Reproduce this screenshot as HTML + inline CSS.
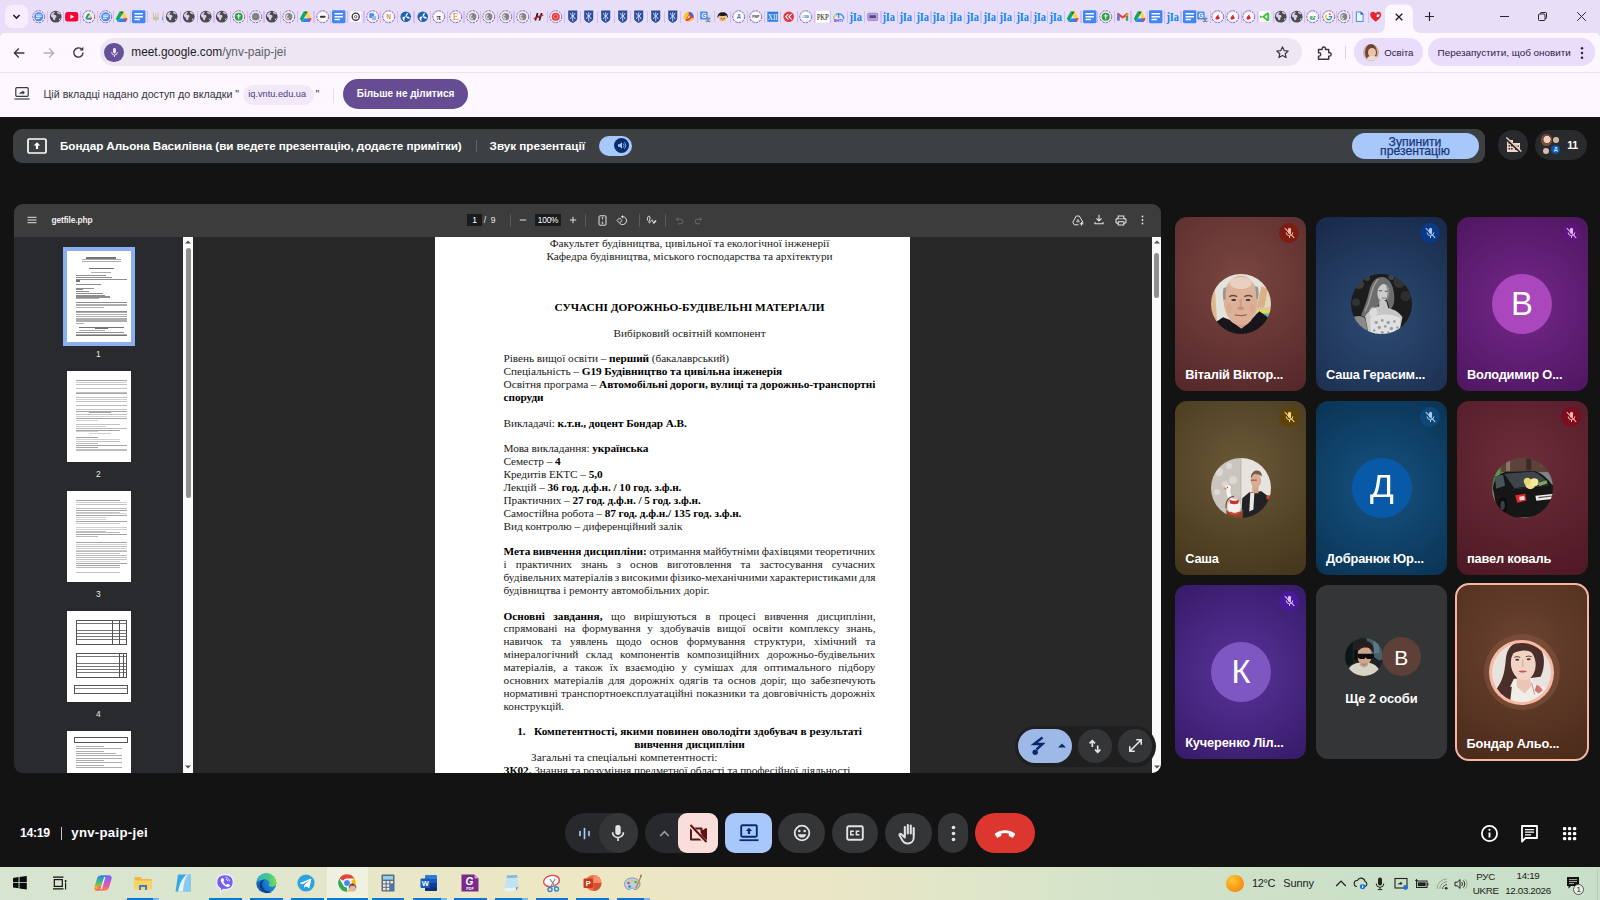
<!DOCTYPE html>
<html lang="uk"><head><meta charset="utf-8"><title>Meet – ynv-paip-jei</title>
<style>
*{box-sizing:border-box;margin:0;padding:0}
html,body{width:1600px;height:900px;overflow:hidden;background:#131314;font-family:"Liberation Sans",sans-serif}
.abs{position:absolute}
#root{position:relative;width:1600px;height:900px;overflow:hidden;background:#131314}
.t{position:absolute;white-space:nowrap;line-height:1}
svg{position:absolute;overflow:visible}
/* chrome */
#tabstrip{position:absolute;left:0;top:0;width:1600px;height:42px;background:#e9def7}
#toolbar{position:absolute;left:0;top:33px;width:1600px;height:39px;background:#fdf7ff;border-top-left-radius:5px;border-top-right-radius:5px}
#infobar{position:absolute;left:0;top:72px;width:1600px;height:44.5px;background:#fdf7ff;border-top:1px solid #ece4f2}
.tsep{position:absolute;top:10.5px;width:1.2px;height:12.5px;background:#d4bdfa}
/* doc */
#doc{position:absolute;left:503.5px;top:236.7px;width:372px;font-family:"Liberation Serif",serif;font-size:11.28px;line-height:12.87px;color:#1a1a1a}
#doc div{height:12.87px;white-space:nowrap}
#doc .c{text-align:center}
#doc .l{letter-spacing:-.055px}
#doc .j{white-space:normal;text-align:justify;text-align-last:justify}
#doc b{font-weight:700;color:#000}
.tile{position:absolute;border-radius:12px;overflow:hidden}
.tname{position:absolute;left:10px;bottom:8.5px;color:#fff;font-weight:700;font-size:12.8px;line-height:15px;white-space:nowrap;letter-spacing:-0.17px}
.av{position:absolute;border-radius:50%;overflow:hidden}
.avl{position:absolute;border-radius:50%;color:#fff;text-align:center}
.badge{position:absolute;width:20px;height:20px;border-radius:50%}
.cbtn{position:absolute;top:813.2px;height:39.8px;background:#333537;border-radius:20px}
</style></head>
<body><div id="root">
<div id="tabstrip">
<div class="abs" style="left:5px;top:5px;width:22.5px;height:23px;border-radius:7px;background:#f7edfd"></div>
<svg style="left:11px;top:11px" width="11" height="11" viewBox="0 0 11 11"><path d="M2.400 4l3.100 3.100L8.600 4" fill="none" stroke="#1f1a26" stroke-width="1.500"/></svg>
<svg style="left:32.03px;top:9.88px" width="13.44" height="13.44" viewBox="0 0 16 16"><circle cx="8" cy="8" r="7.1" fill="#f3ecfb" stroke="#7a68a2" stroke-width="1.15" stroke-dasharray="2.9 1.15"/><circle cx="8" cy="8" r="5.400" fill="#4a8cf5"/><path d="M4.800 6h6.400M4.800 8h6.400M4.800 10h4.200" stroke="#fff" stroke-width="1.150"/></svg>
<div class="tsep" style="left:46.59px"></div>
<svg style="left:48.70px;top:9.88px" width="13.44" height="13.44" viewBox="0 0 16 16"><circle cx="8" cy="8" r="7" fill="#4a4b4e"/><path d="M3 4.600C3.800 3.400 5 2.500 6.400 2c.5.800.2 1.600-.5 2.100-.8.600-.6 1.300.2 1.700.9.400 1.700.1 2.400.6.800.6.400 1.600-.3 2.200-.8.600-.5 1.500-.8 2.400-.2.700-.7 1.200-1.300 1.400-1.200-.8-1.100-2-1.600-3-.6-1-1.900-1.200-2.300-2.300 0-.9.300-1.800.8-2.500zM9.800 1.800c1.800.5 3.200 1.700 3.900 3.400-.6.300-1.300.1-1.700-.4-.5-.5-1.200-.3-1.700-.7-.6-.5-.8-1.500-.5-2.300zM14 9.500c-.3 1.200-.9 2.200-1.800 3-.5-.5-.6-1.200-.2-1.800.5-.6 1.200-1 2-1.200z" fill="#d9cfe8"/></svg>
<div class="tsep" style="left:63.26px"></div>
<svg style="left:65.38px;top:9.88px" width="13.44" height="13.44" viewBox="0 0 16 16"><rect x=".2" y="2.400" width="15.600" height="11.200" rx="3" fill="#ff0033"/><path d="M6.300 5.300v5.400l4.700-2.700z" fill="#fff"/></svg>
<div class="tsep" style="left:79.94px"></div>
<svg style="left:82.06px;top:9.88px" width="13.44" height="13.44" viewBox="0 0 16 16"><circle cx="8" cy="8" r="7.1" fill="#f3ecfb" stroke="#7a68a2" stroke-width="1.15" stroke-dasharray="2.9 1.15"/><g transform="translate(8 8) scale(0.58) translate(-8 -8)"><path d="M5.600 1.800h4.800L15 10h-4.800z" fill="#ffcf48"/><path d="M5.600 1.800L1 10l2.400 4.200L8 6z" fill="#0da960"/><path d="M5.800 10H15l-2.400 4.200H3.400z" fill="#2684fc"/><path d="M10.200 10H15l-2.400 4.200z" fill="#ea4335"/><path d="M5.600 1.800h4.800L8 6z" fill="#00832d"/></g></svg>
<div class="tsep" style="left:96.61px"></div>
<svg style="left:98.73px;top:9.88px" width="13.44" height="13.44" viewBox="0 0 16 16"><circle cx="8" cy="8" r="7.1" fill="#f3ecfb" stroke="#7a68a2" stroke-width="1.15" stroke-dasharray="2.9 1.15"/><circle cx="8" cy="8" r="5.400" fill="#4a8cf5"/><path d="M4.800 6h6.400M4.800 8h6.400M4.800 10h4.200" stroke="#fff" stroke-width="1.150"/></svg>
<div class="tsep" style="left:113.29px"></div>
<svg style="left:115.41px;top:9.88px" width="13.44" height="13.44" viewBox="0 0 16 16"><path d="M5.600 1.800h4.800L15 10h-4.800z" fill="#ffcf48"/><path d="M5.600 1.800L1 10l2.400 4.200L8 6z" fill="#0da960"/><path d="M5.800 10H15l-2.400 4.200H3.400z" fill="#2684fc"/><path d="M10.200 10H15l-2.400 4.200z" fill="#ea4335"/><path d="M5.600 1.800h4.800L8 6z" fill="#00832d"/></svg>
<div class="tsep" style="left:129.96px"></div>
<svg style="left:132.08px;top:9.88px" width="13.44" height="13.44" viewBox="0 0 16 16"><rect x="0" y=".3" width="16" height="15.400" rx="1.600" fill="#4285f4"/><path d="M3 4.600h10M3 8h10M3 11.400h6.400" stroke="#fff" stroke-width="1.800"/></svg>
<div class="tsep" style="left:146.64px"></div>
<svg style="left:148.76px;top:9.88px" width="13.44" height="13.44" viewBox="0 0 16 16"><path d="M4.600 2.200v9.600h2.200L8 14.800l1.200-3h2.200V2.200c-1.200 1-1.700 3-1.500 6H8.800L8 1.400l-.8 6.800H6.100C6.300 5.200 5.800 3.200 4.600 2.200z" fill="#cfc3a6"/><rect x="15.800" y="4" width="1.300" height="4" fill="#f2d34a"/><rect x="15.800" y="8" width="1.300" height="4" fill="#5a8ee0"/></svg>
<div class="tsep" style="left:163.31px"></div>
<svg style="left:165.43px;top:9.88px" width="13.44" height="13.44" viewBox="0 0 16 16"><circle cx="8" cy="8" r="7" fill="#4a4b4e"/><path d="M3 4.600C3.800 3.400 5 2.500 6.400 2c.5.800.2 1.600-.5 2.100-.8.600-.6 1.300.2 1.700.9.400 1.700.1 2.400.6.800.6.400 1.600-.3 2.200-.8.600-.5 1.500-.8 2.400-.2.700-.7 1.200-1.300 1.400-1.200-.8-1.100-2-1.600-3-.6-1-1.900-1.200-2.300-2.300 0-.9.300-1.800.8-2.500zM9.800 1.800c1.800.5 3.200 1.700 3.900 3.400-.6.300-1.300.1-1.700-.4-.5-.5-1.200-.3-1.700-.7-.6-.5-.8-1.500-.5-2.300zM14 9.500c-.3 1.200-.9 2.200-1.800 3-.5-.5-.6-1.200-.2-1.800.5-.6 1.200-1 2-1.200z" fill="#d9cfe8"/></svg>
<div class="tsep" style="left:179.99px"></div>
<svg style="left:182.11px;top:9.88px" width="13.44" height="13.44" viewBox="0 0 16 16"><circle cx="8" cy="8" r="7" fill="#4a4b4e"/><path d="M3 4.600C3.800 3.400 5 2.500 6.400 2c.5.800.2 1.600-.5 2.100-.8.600-.6 1.300.2 1.700.9.400 1.700.1 2.400.6.800.6.400 1.600-.3 2.200-.8.600-.5 1.500-.8 2.400-.2.700-.7 1.200-1.300 1.400-1.200-.8-1.100-2-1.600-3-.6-1-1.900-1.200-2.300-2.300 0-.9.300-1.800.8-2.500zM9.800 1.800c1.800.5 3.200 1.700 3.900 3.400-.6.300-1.300.1-1.700-.4-.5-.5-1.200-.3-1.700-.7-.6-.5-.8-1.500-.5-2.300zM14 9.500c-.3 1.200-.9 2.200-1.800 3-.5-.5-.6-1.200-.2-1.800.5-.6 1.200-1 2-1.200z" fill="#d9cfe8"/></svg>
<div class="tsep" style="left:196.66px"></div>
<svg style="left:198.78px;top:9.88px" width="13.44" height="13.44" viewBox="0 0 16 16"><circle cx="8" cy="8" r="7" fill="#4a4b4e"/><path d="M3 4.600C3.800 3.400 5 2.500 6.400 2c.5.800.2 1.600-.5 2.100-.8.600-.6 1.300.2 1.700.9.400 1.700.1 2.400.6.800.6.400 1.600-.3 2.200-.8.600-.5 1.500-.8 2.400-.2.700-.7 1.200-1.300 1.400-1.200-.8-1.100-2-1.600-3-.6-1-1.900-1.200-2.300-2.300 0-.9.300-1.800.8-2.500zM9.800 1.800c1.800.5 3.200 1.700 3.900 3.400-.6.300-1.300.1-1.700-.4-.5-.5-1.200-.3-1.700-.7-.6-.5-.8-1.500-.5-2.300zM14 9.500c-.3 1.200-.9 2.200-1.800 3-.5-.5-.6-1.200-.2-1.800.5-.6 1.200-1 2-1.200z" fill="#d9cfe8"/></svg>
<div class="tsep" style="left:213.34px"></div>
<svg style="left:215.46px;top:9.88px" width="13.44" height="13.44" viewBox="0 0 16 16"><circle cx="8" cy="8" r="7" fill="#4a4b4e"/><path d="M3 4.600C3.800 3.400 5 2.500 6.400 2c.5.800.2 1.600-.5 2.100-.8.600-.6 1.300.2 1.700.9.400 1.700.1 2.400.6.800.6.400 1.600-.3 2.200-.8.600-.5 1.500-.8 2.400-.2.700-.7 1.200-1.300 1.400-1.200-.8-1.100-2-1.600-3-.6-1-1.900-1.200-2.300-2.300 0-.9.300-1.800.8-2.500zM9.800 1.800c1.800.5 3.200 1.700 3.900 3.400-.6.300-1.300.1-1.700-.4-.5-.5-1.200-.3-1.700-.7-.6-.5-.8-1.500-.5-2.300zM14 9.500c-.3 1.200-.9 2.200-1.800 3-.5-.5-.6-1.200-.2-1.800.5-.6 1.200-1 2-1.200z" fill="#d9cfe8"/></svg>
<div class="tsep" style="left:230.01px"></div>
<svg style="left:232.13px;top:9.88px" width="13.44" height="13.44" viewBox="0 0 16 16"><circle cx="8" cy="8" r="7.1" fill="#f3ecfb" stroke="#7a68a2" stroke-width="1.15" stroke-dasharray="2.9 1.15"/><circle cx="8" cy="8" r="4.800" fill="#2f9e44"/><path d="M8 4.800v6.400M5.600 7h4.800" stroke="#fff" stroke-width="1.100"/></svg>
<div class="tsep" style="left:246.69px"></div>
<svg style="left:248.81px;top:9.88px" width="13.44" height="13.44" viewBox="0 0 16 16"><circle cx="8" cy="8" r="7.1" fill="#f3ecfb" stroke="#7a68a2" stroke-width="1.15" stroke-dasharray="2.9 1.15"/><circle cx="8" cy="8" r="4.600" fill="#8d8d8d"/><circle cx="8" cy="8" r="2.600" fill="none" stroke="#6a6a6a" stroke-width="1"/></svg>
<div class="tsep" style="left:263.36px"></div>
<svg style="left:265.48px;top:9.88px" width="13.44" height="13.44" viewBox="0 0 16 16"><circle cx="8" cy="8" r="7" fill="#4a4b4e"/><path d="M3 4.600C3.800 3.400 5 2.500 6.400 2c.5.800.2 1.600-.5 2.100-.8.600-.6 1.300.2 1.700.9.400 1.700.1 2.400.6.800.6.400 1.600-.3 2.200-.8.600-.5 1.500-.8 2.400-.2.700-.7 1.200-1.300 1.400-1.200-.8-1.100-2-1.600-3-.6-1-1.900-1.200-2.300-2.300 0-.9.300-1.800.8-2.500zM9.800 1.800c1.800.5 3.200 1.700 3.900 3.400-.6.300-1.300.1-1.700-.4-.5-.5-1.200-.3-1.700-.7-.6-.5-.8-1.500-.5-2.300zM14 9.500c-.3 1.200-.9 2.200-1.800 3-.5-.5-.6-1.200-.2-1.800.5-.6 1.200-1 2-1.200z" fill="#d9cfe8"/></svg>
<div class="tsep" style="left:280.04px"></div>
<svg style="left:282.15px;top:9.88px" width="13.44" height="13.44" viewBox="0 0 16 16"><circle cx="8" cy="8" r="7.1" fill="#f3ecfb" stroke="#7a68a2" stroke-width="1.15" stroke-dasharray="2.9 1.15"/><circle cx="8" cy="8" r="4.300" fill="#858585"/><path d="M6.200 5c1 .2 1.700.8 1.400 1.600-.3.700-1.300.6-1.400 1.400-.1.700.6 1 1.400 1.200.8.100 1 .8.600 1.600l-.5.900c-1.900-.100-3.400-1.600-3.400-3.500 0-1.400.8-2.600 1.900-3.200z" fill="#cfcfcf"/></svg>
<div class="tsep" style="left:296.71px"></div>
<svg style="left:298.83px;top:9.88px" width="13.44" height="13.44" viewBox="0 0 16 16"><path d="M5.600 1.800h4.800L15 10h-4.800z" fill="#ffcf48"/><path d="M5.600 1.800L1 10l2.400 4.200L8 6z" fill="#0da960"/><path d="M5.800 10H15l-2.400 4.200H3.400z" fill="#2684fc"/><path d="M10.200 10H15l-2.400 4.200z" fill="#ea4335"/><path d="M5.600 1.800h4.800L8 6z" fill="#00832d"/></svg>
<div class="tsep" style="left:313.39px"></div>
<svg style="left:315.50px;top:9.88px" width="13.44" height="13.44" viewBox="0 0 16 16"><circle cx="8" cy="8" r="7.1" fill="#f3ecfb" stroke="#7a68a2" stroke-width="1.15" stroke-dasharray="2.9 1.15"/><circle cx="8" cy="8" r="5" fill="#fff"/><rect x="4.600" y="6.700" width="6.800" height="2.600" rx="1.300" fill="#333"/></svg>
<div class="tsep" style="left:330.06px"></div>
<svg style="left:332.18px;top:9.88px" width="13.44" height="13.44" viewBox="0 0 16 16"><rect x="0" y=".3" width="16" height="15.400" rx="1.600" fill="#4285f4"/><path d="M3 4.600h10M3 8h10M3 11.400h6.400" stroke="#fff" stroke-width="1.800"/></svg>
<div class="tsep" style="left:346.74px"></div>
<svg style="left:348.85px;top:9.88px" width="13.44" height="13.44" viewBox="0 0 16 16"><rect x="1.600" y="1.600" width="12.800" height="12.800" rx="1.500" fill="#fff"/><circle cx="8" cy="8" r="4.200" fill="none" stroke="#3a3a3a" stroke-width="1.600"/><circle cx="8" cy="8" r="1.500" fill="none" stroke="#3a3a3a" stroke-width=".9"/></svg>
<div class="tsep" style="left:363.41px"></div>
<svg style="left:365.53px;top:9.88px" width="13.44" height="13.44" viewBox="0 0 16 16"><circle cx="8" cy="8" r="7.1" fill="#f3ecfb" stroke="#7a68a2" stroke-width="1.15" stroke-dasharray="2.9 1.15"/><rect x="4" y="4" width="5.600" height="5.600" rx="1" fill="#4a8cf5"/><rect x="7" y="7" width="5" height="5" rx="1" fill="#9db8e8"/></svg>
<div class="tsep" style="left:380.09px"></div>
<svg style="left:382.20px;top:9.88px" width="13.44" height="13.44" viewBox="0 0 16 16"><circle cx="8" cy="8" r="7.1" fill="#f3ecfb" stroke="#7a68a2" stroke-width="1.15" stroke-dasharray="2.9 1.15"/><circle cx="8" cy="8" r="5.200" fill="#fff"/><text x="8" y="10.625" text-anchor="middle" font-family="Liberation Sans, sans-serif" font-size="7.5" font-weight="700" fill="#e8833a">N</text></svg>
<div class="tsep" style="left:396.76px"></div>
<svg style="left:398.88px;top:9.88px" width="13.44" height="13.44" viewBox="0 0 16 16"><circle cx="8" cy="8" r="6.300" fill="#1e62b8"/><path d="M8 8c-.4-2.200.6-4.200 2.600-4.800C10.400 5.400 9.600 7 8 8zM8 8c2.100-.8 4.300 0 5.200 1.900-2.100.7-3.900.1-5.200-1.900zM8 8c-1.700 1.500-2.200 3.700-1 5.500C5 12.800 3.800 10.600 4.200 8.600 5.600 7.600 6.800 7.400 8 8z" fill="#fff"/><path d="M8 8c-1.600-1-3.500-.9-4.700.3.300-2 1.600-3.500 3.300-4.100C7.700 5.400 8.200 6.700 8 8z" fill="#fff" opacity=".0"/></svg>
<div class="tsep" style="left:413.44px"></div>
<svg style="left:415.56px;top:9.88px" width="13.44" height="13.44" viewBox="0 0 16 16"><circle cx="8" cy="8" r="6.300" fill="#1e62b8"/><path d="M8 8c-.4-2.200.6-4.200 2.600-4.800C10.400 5.400 9.600 7 8 8zM8 8c2.100-.8 4.300 0 5.200 1.900-2.100.7-3.900.1-5.200-1.900zM8 8c-1.700 1.500-2.200 3.700-1 5.500C5 12.800 3.800 10.600 4.200 8.600 5.600 7.600 6.800 7.400 8 8z" fill="#fff"/><path d="M8 8c-1.600-1-3.500-.9-4.700.3.300-2 1.600-3.500 3.300-4.100C7.700 5.400 8.200 6.700 8 8z" fill="#fff" opacity=".0"/></svg>
<div class="tsep" style="left:430.11px"></div>
<svg style="left:432.23px;top:9.88px" width="13.44" height="13.44" viewBox="0 0 16 16"><circle cx="8" cy="8" r="7.1" fill="#f3ecfb" stroke="#7a68a2" stroke-width="1.15" stroke-dasharray="2.9 1.15"/><circle cx="8" cy="8" r="5.200" fill="#fff"/><text x="8" y="11.325" text-anchor="middle" font-family="Liberation Serif, serif" font-size="9.5" font-weight="700" fill="#444">π</text></svg>
<div class="tsep" style="left:446.79px"></div>
<svg style="left:448.90px;top:9.88px" width="13.44" height="13.44" viewBox="0 0 16 16"><circle cx="8" cy="8" r="7.1" fill="#f3ecfb" stroke="#7a68a2" stroke-width="1.15" stroke-dasharray="2.9 1.15"/><circle cx="8" cy="8" r="5.200" fill="#fff"/><text x="8" y="12.375" text-anchor="middle" font-family="Liberation Serif, serif" font-size="12.5" font-weight="400" fill="#f08030">E</text></svg>
<div class="tsep" style="left:463.46px"></div>
<svg style="left:465.58px;top:9.88px" width="13.44" height="13.44" viewBox="0 0 16 16"><circle cx="8" cy="8" r="7.1" fill="#f3ecfb" stroke="#7a68a2" stroke-width="1.15" stroke-dasharray="2.9 1.15"/><circle cx="8" cy="8" r="4.300" fill="#858585"/><path d="M6.200 5c1 .2 1.700.8 1.400 1.600-.3.700-1.300.6-1.400 1.400-.1.700.6 1 1.400 1.200.8.100 1 .8.600 1.600l-.5.900c-1.900-.100-3.400-1.600-3.400-3.500 0-1.400.8-2.600 1.900-3.200z" fill="#cfcfcf"/></svg>
<div class="tsep" style="left:480.14px"></div>
<svg style="left:482.25px;top:9.88px" width="13.44" height="13.44" viewBox="0 0 16 16"><circle cx="8" cy="8" r="7.1" fill="#f3ecfb" stroke="#7a68a2" stroke-width="1.15" stroke-dasharray="2.9 1.15"/><circle cx="8" cy="8" r="4.300" fill="#858585"/><path d="M6.200 5c1 .2 1.700.8 1.400 1.600-.3.700-1.300.6-1.400 1.400-.1.700.6 1 1.400 1.200.8.100 1 .8.600 1.600l-.5.900c-1.900-.100-3.400-1.600-3.400-3.500 0-1.400.8-2.600 1.900-3.200z" fill="#cfcfcf"/></svg>
<div class="tsep" style="left:496.81px"></div>
<svg style="left:498.93px;top:9.88px" width="13.44" height="13.44" viewBox="0 0 16 16"><circle cx="8" cy="8" r="7.1" fill="#f3ecfb" stroke="#7a68a2" stroke-width="1.15" stroke-dasharray="2.9 1.15"/><circle cx="8" cy="8" r="4.300" fill="#858585"/><path d="M6.200 5c1 .2 1.700.8 1.400 1.600-.3.700-1.300.6-1.400 1.400-.1.700.6 1 1.400 1.200.8.100 1 .8.600 1.600l-.5.900c-1.900-.100-3.400-1.600-3.400-3.500 0-1.400.8-2.600 1.900-3.200z" fill="#cfcfcf"/></svg>
<div class="tsep" style="left:513.49px"></div>
<svg style="left:515.61px;top:9.88px" width="13.44" height="13.44" viewBox="0 0 16 16"><circle cx="8" cy="8" r="7.1" fill="#f3ecfb" stroke="#7a68a2" stroke-width="1.15" stroke-dasharray="2.9 1.15"/><circle cx="8" cy="8" r="4.300" fill="#858585"/><path d="M6.200 5c1 .2 1.700.8 1.400 1.600-.3.700-1.300.6-1.400 1.400-.1.700.6 1 1.400 1.200.8.100 1 .8.600 1.600l-.5.900c-1.900-.100-3.400-1.600-3.400-3.500 0-1.400.8-2.600 1.900-3.200z" fill="#cfcfcf"/></svg>
<div class="tsep" style="left:530.16px"></div>
<svg style="left:532.28px;top:9.88px" width="13.44" height="13.44" viewBox="0 0 16 16"><path d="M3 12.500l2.600-9h2l-.9 3.200h2.800l.9-3.200h2l-2.600 9h-2l1-3.600H6l-1 3.600z" fill="#1f1f1f"/><path d="M1.800 9.600l11.400-4.400.6 1.300L2.400 10.900z" fill="#e01b24"/></svg>
<div class="tsep" style="left:546.84px"></div>
<svg style="left:548.96px;top:9.88px" width="13.44" height="13.44" viewBox="0 0 16 16"><circle cx="8" cy="8" r="7.1" fill="#f3ecfb" stroke="#7a68a2" stroke-width="1.15" stroke-dasharray="2.9 1.15"/><circle cx="8" cy="8" r="4.800" fill="#e5383b"/><circle cx="8" cy="8" r="2.600" fill="none" stroke="#f8b4b4" stroke-width=".8"/></svg>
<div class="tsep" style="left:563.51px"></div>
<svg style="left:565.63px;top:9.88px" width="13.44" height="13.44" viewBox="0 0 16 16"><path d="M2.600 .6h10.800v9c0 3-2.300 4.800-5.400 5.800-3.100-1-5.400-2.800-5.400-5.800z" fill="#2b4da0"/><path d="M8 2.600v11M5.200 3.600c0 3.600 5.600 3.600 5.600 7.200M10.800 3.600c0 3.600-5.600 3.600-5.600 7.200" stroke="#e4eaf7" stroke-width="1" fill="none"/></svg>
<div class="tsep" style="left:580.19px"></div>
<svg style="left:582.30px;top:9.88px" width="13.44" height="13.44" viewBox="0 0 16 16"><path d="M2.600 .6h10.800v9c0 3-2.300 4.800-5.400 5.800-3.100-1-5.400-2.800-5.400-5.800z" fill="#2b4da0"/><path d="M8 2.600v11M5.200 3.600c0 3.600 5.600 3.600 5.600 7.200M10.800 3.600c0 3.600-5.600 3.600-5.600 7.200" stroke="#e4eaf7" stroke-width="1" fill="none"/></svg>
<div class="tsep" style="left:596.86px"></div>
<svg style="left:598.98px;top:9.88px" width="13.44" height="13.44" viewBox="0 0 16 16"><path d="M2.600 .6h10.800v9c0 3-2.300 4.800-5.400 5.800-3.100-1-5.400-2.800-5.400-5.800z" fill="#2b4da0"/><path d="M8 2.600v11M5.200 3.600c0 3.600 5.600 3.600 5.600 7.200M10.800 3.600c0 3.600-5.600 3.600-5.600 7.200" stroke="#e4eaf7" stroke-width="1" fill="none"/></svg>
<div class="tsep" style="left:613.54px"></div>
<svg style="left:615.65px;top:9.88px" width="13.44" height="13.44" viewBox="0 0 16 16"><path d="M2.600 .6h10.800v9c0 3-2.300 4.800-5.400 5.800-3.100-1-5.400-2.800-5.400-5.800z" fill="#2b4da0"/><path d="M8 2.600v11M5.200 3.600c0 3.600 5.600 3.600 5.600 7.200M10.800 3.600c0 3.600-5.600 3.600-5.600 7.200" stroke="#e4eaf7" stroke-width="1" fill="none"/></svg>
<div class="tsep" style="left:630.21px"></div>
<svg style="left:632.33px;top:9.88px" width="13.44" height="13.44" viewBox="0 0 16 16"><path d="M2.600 .6h10.800v9c0 3-2.300 4.800-5.400 5.800-3.100-1-5.400-2.800-5.400-5.800z" fill="#2b4da0"/><path d="M8 2.600v11M5.200 3.600c0 3.600 5.600 3.600 5.600 7.200M10.800 3.600c0 3.600-5.600 3.600-5.600 7.200" stroke="#e4eaf7" stroke-width="1" fill="none"/></svg>
<div class="tsep" style="left:646.89px"></div>
<svg style="left:649.00px;top:9.88px" width="13.44" height="13.44" viewBox="0 0 16 16"><path d="M2.600 .6h10.800v9c0 3-2.300 4.800-5.400 5.800-3.100-1-5.400-2.800-5.400-5.800z" fill="#2b4da0"/><path d="M8 2.600v11M5.200 3.600c0 3.600 5.600 3.600 5.600 7.200M10.800 3.600c0 3.600-5.600 3.600-5.600 7.200" stroke="#e4eaf7" stroke-width="1" fill="none"/></svg>
<div class="tsep" style="left:663.56px"></div>
<svg style="left:665.68px;top:9.88px" width="13.44" height="13.44" viewBox="0 0 16 16"><path d="M2.600 .6h10.800v9c0 3-2.300 4.800-5.400 5.800-3.100-1-5.400-2.800-5.400-5.800z" fill="#2b4da0"/><path d="M8 2.600v11M5.200 3.600c0 3.600 5.600 3.600 5.600 7.200M10.800 3.600c0 3.600-5.600 3.600-5.600 7.200" stroke="#e4eaf7" stroke-width="1" fill="none"/></svg>
<div class="tsep" style="left:680.24px"></div>
<svg style="left:682.36px;top:9.88px" width="13.44" height="13.44" viewBox="0 0 16 16"><circle cx="8" cy="8" r="6" fill="#f7c531"/><path d="M8 2a6 6 0 0 1 5.600 8L8 8z" fill="#3d6fd6"/><path d="M4 12.500L9.400 3l1.400 4.200 2.600.4L7 13z" fill="#e5383b"/><path d="M6 11l2.600-5 .8 2.600z" fill="#fff"/></svg>
<div class="tsep" style="left:696.91px"></div>
<svg style="left:699.03px;top:9.88px" width="13.44" height="13.44" viewBox="0 0 16 16"><rect x="6.600" y="5.600" width="8" height="8.600" rx="1" fill="#d4d8de"/><text x="10.800" y="12.600" font-family="Liberation Sans, Noto Sans CJK SC, sans-serif" font-size="6" font-weight="700" fill="#5f6f8a" text-anchor="middle">文</text><rect x="1.400" y="1.800" width="8.800" height="9.400" rx="1" fill="#4a8cf5"/><text x="5.800" y="9.200" font-family="Liberation Sans, sans-serif" font-size="7.500" font-weight="700" fill="#fff" text-anchor="middle">G</text></svg>
<div class="tsep" style="left:713.59px"></div>
<svg style="left:715.71px;top:9.88px" width="13.44" height="13.44" viewBox="0 0 16 16"><ellipse cx="8" cy="9.800" rx="4.400" ry="3.800" fill="#f4c27a"/><path d="M1.800 9.400C1.400 5 4.200 2.600 8 2.600s6.600 2.400 6.200 6.800c-.9-.8-1.500-1.800-1.800-2.800-2.600.8-5.800.7-8.800-.1-.3 1.100-.9 2.100-1.800 2.900z" fill="#1a1a1a"/><circle cx="6.300" cy="9.800" r=".7" fill="#222"/><circle cx="9.700" cy="9.800" r=".7" fill="#222"/><path d="M6.600 11.600h2.800" stroke="#c0392b" stroke-width=".8"/></svg>
<div class="tsep" style="left:730.26px"></div>
<svg style="left:732.38px;top:9.88px" width="13.44" height="13.44" viewBox="0 0 16 16"><circle cx="8" cy="8" r="7.1" fill="#f3ecfb" stroke="#7a68a2" stroke-width="1.15" stroke-dasharray="2.9 1.15"/><circle cx="8" cy="8" r="5.200" fill="#fff"/><text x="8" y="10.1" text-anchor="middle" font-family="Liberation Sans, sans-serif" font-size="6" font-weight="700" fill="#2a6fd6">Д</text></svg>
<div class="tsep" style="left:746.94px"></div>
<svg style="left:749.05px;top:9.88px" width="13.44" height="13.44" viewBox="0 0 16 16"><circle cx="8" cy="8" r="7.1" fill="#f3ecfb" stroke="#7a68a2" stroke-width="1.15" stroke-dasharray="2.9 1.15"/><circle cx="8" cy="8" r="5.200" fill="#fff"/><text x="8" y="9.4" text-anchor="middle" font-family="Liberation Sans, sans-serif" font-size="4" font-weight="700" fill="#333">PNP</text></svg>
<div class="tsep" style="left:763.61px"></div>
<svg style="left:765.73px;top:9.88px" width="13.44" height="13.44" viewBox="0 0 16 16"><rect x="1.600" y="2" width="12.800" height="12" fill="#2f7fe0"/><text x="8" y="12" text-anchor="middle" font-family="Liberation Serif, serif" font-size="11" fill="#fff" textLength="12" lengthAdjust="spacingAndGlyphs">XII</text></svg>
<div class="tsep" style="left:780.29px"></div>
<svg style="left:782.40px;top:9.88px" width="13.44" height="13.44" viewBox="0 0 16 16"><circle cx="8" cy="8" r="6.300" fill="#e0394a"/><path d="M7.600 4.800L4.400 8l3.200 3.200M11.400 4.800L8.200 8l3.200 3.200" stroke="#fff" stroke-width="1.300" fill="none"/></svg>
<div class="tsep" style="left:796.96px"></div>
<svg style="left:799.08px;top:9.88px" width="13.44" height="13.44" viewBox="0 0 16 16"><circle cx="8" cy="8" r="7.1" fill="#f3ecfb" stroke="#7a68a2" stroke-width="1.15" stroke-dasharray="2.9 1.15"/><circle cx="8" cy="8" r="5.200" fill="#fff"/><text x="8" y="9.75" text-anchor="middle" font-family="Liberation Sans, sans-serif" font-size="5" font-weight="700" fill="#3a8cf0">iЗВ</text></svg>
<div class="tsep" style="left:813.64px"></div>
<svg style="left:815.75px;top:9.88px" width="13.44" height="13.44" viewBox="0 0 16 16"><rect x="0" y="1" width="16" height="14" fill="#fff"/><text x="8" y="11.800" text-anchor="middle" font-family="Liberation Serif, serif" font-size="10.500" fill="#111" textLength="14.500" lengthAdjust="spacingAndGlyphs">PKP</text></svg>
<div class="tsep" style="left:830.31px"></div>
<svg style="left:832.43px;top:9.88px" width="13.44" height="13.44" viewBox="0 0 16 16"><path d="M2 10.500a6 6 0 0 1 12 0" fill="none" stroke="#2a9be0" stroke-width="1.700"/><path d="M2 10.500a6 6 0 0 1 2.800-5.100" fill="none" stroke="#f3e24a" stroke-width="1.700"/><path d="M8 5v4.500" stroke="#3a4fd0" stroke-width="1.100"/><text x="8" y="14.400" text-anchor="middle" font-family="Liberation Sans, sans-serif" font-size="4.600" font-weight="700" fill="#3a3fd8" textLength="11" lengthAdjust="spacingAndGlyphs">ВНТУ</text></svg>
<div class="tsep" style="left:846.99px"></div>
<svg style="left:849.11px;top:9.88px" width="13.44" height="13.44" viewBox="0 0 16 16"><text x="8" y="13.600" text-anchor="middle" font-family="Liberation Serif, serif" font-size="14.500" font-weight="700" fill="#0a84ff" textLength="15" lengthAdjust="spacingAndGlyphs">jIa</text></svg>
<div class="tsep" style="left:863.66px"></div>
<svg style="left:865.78px;top:9.88px" width="13.44" height="13.44" viewBox="0 0 16 16"><rect x="2" y="3.800" width="12" height="8.800" rx="1.200" fill="#b8a4d6" stroke="#8a70b5" stroke-width=".8"/><rect x="4.200" y="6.200" width="7.600" height="3.400" fill="#5e3f94"/></svg>
<div class="tsep" style="left:880.34px"></div>
<svg style="left:882.46px;top:9.88px" width="13.44" height="13.44" viewBox="0 0 16 16"><text x="8" y="13.600" text-anchor="middle" font-family="Liberation Serif, serif" font-size="14.500" font-weight="700" fill="#0a84ff" textLength="15" lengthAdjust="spacingAndGlyphs">jIa</text></svg>
<div class="tsep" style="left:897.01px"></div>
<svg style="left:899.13px;top:9.88px" width="13.44" height="13.44" viewBox="0 0 16 16"><text x="8" y="13.600" text-anchor="middle" font-family="Liberation Serif, serif" font-size="14.500" font-weight="700" fill="#0a84ff" textLength="15" lengthAdjust="spacingAndGlyphs">jIa</text></svg>
<div class="tsep" style="left:913.69px"></div>
<svg style="left:915.81px;top:9.88px" width="13.44" height="13.44" viewBox="0 0 16 16"><text x="8" y="13.600" text-anchor="middle" font-family="Liberation Serif, serif" font-size="14.500" font-weight="700" fill="#0a84ff" textLength="15" lengthAdjust="spacingAndGlyphs">jIa</text></svg>
<div class="tsep" style="left:930.36px"></div>
<svg style="left:932.48px;top:9.88px" width="13.44" height="13.44" viewBox="0 0 16 16"><text x="8" y="13.600" text-anchor="middle" font-family="Liberation Serif, serif" font-size="14.500" font-weight="700" fill="#0a84ff" textLength="15" lengthAdjust="spacingAndGlyphs">jIa</text></svg>
<div class="tsep" style="left:947.04px"></div>
<svg style="left:949.15px;top:9.88px" width="13.44" height="13.44" viewBox="0 0 16 16"><text x="8" y="13.600" text-anchor="middle" font-family="Liberation Serif, serif" font-size="14.500" font-weight="700" fill="#0a84ff" textLength="15" lengthAdjust="spacingAndGlyphs">jIa</text></svg>
<div class="tsep" style="left:963.71px"></div>
<svg style="left:965.83px;top:9.88px" width="13.44" height="13.44" viewBox="0 0 16 16"><text x="8" y="13.600" text-anchor="middle" font-family="Liberation Serif, serif" font-size="14.500" font-weight="700" fill="#0a84ff" textLength="15" lengthAdjust="spacingAndGlyphs">jIa</text></svg>
<div class="tsep" style="left:980.39px"></div>
<svg style="left:982.50px;top:9.88px" width="13.44" height="13.44" viewBox="0 0 16 16"><text x="8" y="13.600" text-anchor="middle" font-family="Liberation Serif, serif" font-size="14.500" font-weight="700" fill="#0a84ff" textLength="15" lengthAdjust="spacingAndGlyphs">jIa</text></svg>
<div class="tsep" style="left:997.06px"></div>
<svg style="left:999.18px;top:9.88px" width="13.44" height="13.44" viewBox="0 0 16 16"><text x="8" y="13.600" text-anchor="middle" font-family="Liberation Serif, serif" font-size="14.500" font-weight="700" fill="#0a84ff" textLength="15" lengthAdjust="spacingAndGlyphs">jIa</text></svg>
<div class="tsep" style="left:1013.74px"></div>
<svg style="left:1015.86px;top:9.88px" width="13.44" height="13.44" viewBox="0 0 16 16"><text x="8" y="13.600" text-anchor="middle" font-family="Liberation Serif, serif" font-size="14.500" font-weight="700" fill="#0a84ff" textLength="15" lengthAdjust="spacingAndGlyphs">jIa</text></svg>
<div class="tsep" style="left:1030.41px"></div>
<svg style="left:1032.53px;top:9.88px" width="13.44" height="13.44" viewBox="0 0 16 16"><text x="8" y="13.600" text-anchor="middle" font-family="Liberation Serif, serif" font-size="14.500" font-weight="700" fill="#0a84ff" textLength="15" lengthAdjust="spacingAndGlyphs">jIa</text></svg>
<div class="tsep" style="left:1047.09px"></div>
<svg style="left:1049.21px;top:9.88px" width="13.44" height="13.44" viewBox="0 0 16 16"><text x="8" y="13.600" text-anchor="middle" font-family="Liberation Serif, serif" font-size="14.500" font-weight="700" fill="#0a84ff" textLength="15" lengthAdjust="spacingAndGlyphs">jIa</text></svg>
<div class="tsep" style="left:1063.76px"></div>
<svg style="left:1065.88px;top:9.88px" width="13.44" height="13.44" viewBox="0 0 16 16"><path d="M5.600 1.800h4.800L15 10h-4.800z" fill="#ffcf48"/><path d="M5.600 1.800L1 10l2.400 4.200L8 6z" fill="#0da960"/><path d="M5.800 10H15l-2.400 4.200H3.400z" fill="#2684fc"/><path d="M10.200 10H15l-2.400 4.200z" fill="#ea4335"/><path d="M5.600 1.800h4.800L8 6z" fill="#00832d"/></svg>
<div class="tsep" style="left:1080.44px"></div>
<svg style="left:1082.56px;top:9.88px" width="13.44" height="13.44" viewBox="0 0 16 16"><rect x="0" y=".3" width="16" height="15.400" rx="1.600" fill="#4285f4"/><path d="M3 4.600h10M3 8h10M3 11.400h6.400" stroke="#fff" stroke-width="1.800"/></svg>
<div class="tsep" style="left:1097.11px"></div>
<svg style="left:1099.23px;top:9.88px" width="13.44" height="13.44" viewBox="0 0 16 16"><circle cx="8" cy="8" r="7.1" fill="#f3ecfb" stroke="#7a68a2" stroke-width="1.15" stroke-dasharray="2.9 1.15"/><circle cx="8" cy="8" r="4.800" fill="#2f9e44"/><path d="M8 4.800v6.400M5.600 7h4.800" stroke="#fff" stroke-width="1.100"/></svg>
<div class="tsep" style="left:1113.79px"></div>
<svg style="left:1115.90px;top:9.88px" width="13.44" height="13.44" viewBox="0 0 16 16"><path d="M1.600 4v8.400h2.600V7.600L8 10.400l3.800-2.800v4.800h2.600V4l-1.200-.6L8 7.400 2.800 3.400z" fill="#ea4335"/><path d="M1.600 4v8.400h2.600V6z" fill="#4285f4"/><path d="M14.400 4v8.400h-2.600V6z" fill="#34a853"/><path d="M11.800 6l2.600-2v2l-2.600 1.800z" fill="#fbbc04"/></svg>
<div class="tsep" style="left:1130.46px"></div>
<svg style="left:1132.58px;top:9.88px" width="13.44" height="13.44" viewBox="0 0 16 16"><path d="M5.600 1.800h4.800L15 10h-4.800z" fill="#ffcf48"/><path d="M5.600 1.800L1 10l2.400 4.200L8 6z" fill="#0da960"/><path d="M5.800 10H15l-2.400 4.200H3.400z" fill="#2684fc"/><path d="M10.200 10H15l-2.400 4.200z" fill="#ea4335"/><path d="M5.600 1.800h4.800L8 6z" fill="#00832d"/></svg>
<div class="tsep" style="left:1147.14px"></div>
<svg style="left:1149.26px;top:9.88px" width="13.44" height="13.44" viewBox="0 0 16 16"><rect x="0" y=".3" width="16" height="15.400" rx="1.600" fill="#4285f4"/><path d="M3 4.600h10M3 8h10M3 11.400h6.400" stroke="#fff" stroke-width="1.800"/></svg>
<div class="tsep" style="left:1163.81px"></div>
<svg style="left:1165.93px;top:9.88px" width="13.44" height="13.44" viewBox="0 0 16 16"><text x="8" y="13.600" text-anchor="middle" font-family="Liberation Serif, serif" font-size="14.500" font-weight="700" fill="#0a84ff" textLength="15" lengthAdjust="spacingAndGlyphs">jIa</text></svg>
<div class="tsep" style="left:1180.49px"></div>
<svg style="left:1182.61px;top:9.88px" width="13.44" height="13.44" viewBox="0 0 16 16"><rect x="0" y=".3" width="16" height="15.400" rx="1.600" fill="#4285f4"/><path d="M3 4.600h10M3 8h10M3 11.400h6.400" stroke="#fff" stroke-width="1.800"/></svg>
<div class="tsep" style="left:1195.66px"></div>
<svg style="left:1196.28px;top:9.88px" width="13.44" height="13.44" viewBox="0 0 16 16"><rect x="6.600" y="5.600" width="8" height="8.600" rx="1" fill="#d4d8de"/><text x="10.800" y="12.600" font-family="Liberation Sans, Noto Sans CJK SC, sans-serif" font-size="6" font-weight="700" fill="#5f6f8a" text-anchor="middle">文</text><rect x="1.400" y="1.800" width="8.800" height="9.400" rx="1" fill="#4a8cf5"/><text x="5.800" y="9.200" font-family="Liberation Sans, sans-serif" font-size="7.500" font-weight="700" fill="#fff" text-anchor="middle">G</text></svg>
<div class="tsep" style="left:1209.75px"></div>
<svg style="left:1210.78px;top:9.88px" width="13.44" height="13.44" viewBox="0 0 16 16"><circle cx="8" cy="8" r="7.1" fill="#f3ecfb" stroke="#7a68a2" stroke-width="1.15" stroke-dasharray="2.9 1.15"/><circle cx="8" cy="8" r="5" fill="#fff"/><path d="M5.200 10.600c.6-2.800 2-4.800 4.200-5.600-.8 1.200-.6 2.200.2 3 .8.800 1 1.800.2 2.800-1.400.6-3.200.6-4.800-.2z" fill="#e0242f"/></svg>
<div class="tsep" style="left:1224.85px"></div>
<svg style="left:1226.48px;top:9.88px" width="13.44" height="13.44" viewBox="0 0 16 16"><circle cx="8" cy="8" r="7.1" fill="#f3ecfb" stroke="#7a68a2" stroke-width="1.15" stroke-dasharray="2.9 1.15"/><circle cx="8" cy="8" r="5" fill="#fff"/><path d="M5.200 10.600c.6-2.800 2-4.800 4.200-5.600-.8 1.200-.6 2.200.2 3 .8.800 1 1.800.2 2.800-1.400.6-3.200.6-4.800-.2z" fill="#e0242f"/></svg>
<div class="tsep" style="left:1240.60px"></div>
<svg style="left:1242.28px;top:9.88px" width="13.44" height="13.44" viewBox="0 0 16 16"><circle cx="8" cy="8" r="7.1" fill="#f3ecfb" stroke="#7a68a2" stroke-width="1.15" stroke-dasharray="2.9 1.15"/><circle cx="8" cy="8" r="5" fill="#fff"/><path d="M5.200 10.600c.6-2.800 2-4.800 4.200-5.600-.8 1.200-.6 2.200.2 3 .8.800 1 1.800.2 2.800-1.400.6-3.200.6-4.800-.2z" fill="#e0242f"/></svg>
<div class="tsep" style="left:1256.50px"></div>
<svg style="left:1258.28px;top:9.88px" width="13.44" height="13.44" viewBox="0 0 16 16"><rect x="1.600" y="1.600" width="12.800" height="12.800" fill="#fff"/><path d="M11 2.600l2.400 1v8.800l-2.400 1-6-5.200-1.800 1.400-.9-.5V6.900l.9-.5L5 7.800zM11 5.600L8 8l3 2.400z" fill="#3fbf3f"/></svg>
<div class="tsep" style="left:1272.50px"></div>
<svg style="left:1274.28px;top:9.88px" width="13.44" height="13.44" viewBox="0 0 16 16"><circle cx="8" cy="8" r="7" fill="#4a4b4e"/><path d="M3 4.600C3.800 3.400 5 2.500 6.400 2c.5.800.2 1.600-.5 2.100-.8.600-.6 1.300.2 1.700.9.400 1.700.1 2.400.6.800.6.400 1.600-.3 2.200-.8.600-.5 1.500-.8 2.400-.2.700-.7 1.200-1.300 1.400-1.200-.8-1.100-2-1.600-3-.6-1-1.900-1.200-2.300-2.300 0-.9.300-1.800.8-2.500zM9.800 1.800c1.800.5 3.200 1.700 3.900 3.400-.6.300-1.300.1-1.700-.4-.5-.5-1.200-.3-1.700-.7-.6-.5-.8-1.500-.5-2.300zM14 9.500c-.3 1.200-.9 2.200-1.800 3-.5-.5-.6-1.200-.2-1.800.5-.6 1.200-1 2-1.200z" fill="#d9cfe8"/></svg>
<div class="tsep" style="left:1288.50px"></div>
<svg style="left:1290.28px;top:9.88px" width="13.44" height="13.44" viewBox="0 0 16 16"><circle cx="8" cy="8" r="7" fill="#4a4b4e"/><path d="M3 4.600C3.800 3.400 5 2.500 6.400 2c.5.800.2 1.600-.5 2.100-.8.600-.6 1.300.2 1.700.9.400 1.700.1 2.400.6.800.6.400 1.600-.3 2.200-.8.600-.5 1.500-.8 2.400-.2.700-.7 1.200-1.300 1.400-1.200-.8-1.100-2-1.600-3-.6-1-1.900-1.200-2.300-2.300 0-.9.300-1.800.8-2.500zM9.800 1.800c1.800.5 3.200 1.700 3.900 3.400-.6.300-1.300.1-1.700-.4-.5-.5-1.200-.3-1.700-.7-.6-.5-.8-1.500-.5-2.300zM14 9.500c-.3 1.200-.9 2.200-1.800 3-.5-.5-.6-1.200-.2-1.800.5-.6 1.200-1 2-1.200z" fill="#d9cfe8"/></svg>
<div class="tsep" style="left:1304.30px"></div>
<svg style="left:1305.88px;top:9.88px" width="13.44" height="13.44" viewBox="0 0 16 16"><circle cx="8" cy="8" r="7.1" fill="#f3ecfb" stroke="#7a68a2" stroke-width="1.15" stroke-dasharray="2.9 1.15"/><circle cx="8" cy="8" r="5" fill="#fff"/><text x="8" y="10.600" text-anchor="middle" font-family="Liberation Sans, sans-serif" font-size="7" font-weight="700" font-style="italic" fill="#2f9e44">ez</text><path d="M5.400 11.200h5.200" stroke="#2a6fd6" stroke-width=".9"/></svg>
<div class="tsep" style="left:1320.00px"></div>
<svg style="left:1321.68px;top:9.88px" width="13.44" height="13.44" viewBox="0 0 16 16"><circle cx="8" cy="8" r="7.1" fill="#f3ecfb" stroke="#7a68a2" stroke-width="1.15" stroke-dasharray="2.9 1.15"/><circle cx="8" cy="8" r="5" fill="#fff"/><path d="M8 4.600a3.400 3.400 0 0 1 2.400 1" fill="none" stroke="#ea4335" stroke-width="1.500"/><path d="M5.600 5.600a3.400 3.400 0 0 0 0 4.800" fill="none" stroke="#fbbc04" stroke-width="1.500"/><path d="M5.600 10.400a3.400 3.400 0 0 0 4.800 0" fill="none" stroke="#34a853" stroke-width="1.500"/><path d="M10.400 10.400a3.400 3.400 0 0 0 1-2.400H8" fill="none" stroke="#4285f4" stroke-width="1.500"/></svg>
<div class="tsep" style="left:1335.80px"></div>
<svg style="left:1337.48px;top:9.88px" width="13.44" height="13.44" viewBox="0 0 16 16"><circle cx="8" cy="8" r="7.1" fill="#f3ecfb" stroke="#7a68a2" stroke-width="1.15" stroke-dasharray="2.9 1.15"/><circle cx="8" cy="8" r="4.300" fill="#858585"/><path d="M6.200 5c1 .2 1.700.8 1.400 1.600-.3.700-1.300.6-1.400 1.400-.1.700.6 1 1.400 1.200.8.100 1 .8.600 1.600l-.5.900c-1.900-.100-3.400-1.600-3.400-3.500 0-1.400.8-2.600 1.900-3.200z" fill="#cfcfcf"/></svg>
<div class="tsep" style="left:1351.60px"></div>
<svg style="left:1353.28px;top:9.88px" width="13.44" height="13.44" viewBox="0 0 16 16"><path d="M3.400 1.800h6l3.200 3.200v9.200H3.400z" fill="#4a90e2"/><path d="M4.600 3h4.200v2.800h2.600v7.200H4.600z" fill="#eaf3ff"/><path d="M9.400 1.800l3.200 3.200H9.400z" fill="#1f5fb4"/></svg>
<div class="tsep" style="left:1367.50px"></div>
<svg style="left:1369.28px;top:9.88px" width="13.44" height="13.44" viewBox="0 0 16 16"><path d="M8 14C3.600 10.600 1.400 8.200 1.400 5.600 1.400 3.600 2.900 2.200 4.700 2.200c1.300 0 2.500.7 3.300 1.800.8-1.100 2-1.800 3.300-1.800 1.800 0 3.300 1.400 3.300 3.400C14.600 8.200 12.400 10.600 8 14z" fill="#e3262f"/><path d="M9.600 5.200l3.400.6-1.600 2.800-2.600-.6z" fill="#fff"/></svg>
<svg style="left:1377px;top:4px" width="44" height="29" viewBox="0 0 44 29"><path d="M0 29c5 0 8-3 8-8V8c0-4 3-7.500 7-7.500h14c4 0 7 3.500 7 7.500v13c0 5 3 8 8 8z" fill="#fdf7ff"/></svg>
<svg style="left:1394px;top:11.500px" width="10" height="10" viewBox="0 0 10 10"><path d="M1.700 1.700l6.600 6.600M8.300 1.700L1.700 8.300" stroke="#1f1a26" stroke-width="1.300"/></svg>
<svg style="left:1423.500px;top:11px" width="11" height="11" viewBox="0 0 11 11"><path d="M5.500 1v9M1 5.500h9" stroke="#2a2433" stroke-width="1.200"/></svg>
<svg style="left:1499px;top:11px" width="11" height="11" viewBox="0 0 11 11"><path d="M1 5.500h9" stroke="#2a2433" stroke-width="1"/></svg>
<svg style="left:1537px;top:11px" width="11" height="11" viewBox="0 0 11 11"><rect x="1.500" y="3" width="6.500" height="6.500" rx="1" fill="none" stroke="#2a2433" stroke-width="1"/><path d="M3.500 3V2.200c0-.4.300-.7.700-.7h4.600c.4 0 .7.300.7.700v4.600c0 .4-.3.700-.7.700H8" fill="none" stroke="#2a2433" stroke-width="1"/></svg>
<svg style="left:1575.500px;top:11px" width="11" height="11" viewBox="0 0 11 11"><path d="M1.200 1.200l8.600 8.600M9.800 1.200L1.200 9.800" stroke="#2a2433" stroke-width="1"/></svg>
</div>
<div id="toolbar">
<svg style="left:11.500px;top:12.500px" width="14" height="14" viewBox="0 0 14 14"><path d="M12.400 7H2.600M6.800 2.600L2.400 7l4.400 4.400" fill="none" stroke="#3b3640" stroke-width="1.350"/></svg>
<svg style="left:41.500px;top:12.500px" width="14" height="14" viewBox="0 0 14 14"><path d="M1.600 7h9.800M7.200 2.600L11.600 7l-4.400 4.400" fill="none" stroke="#b5afba" stroke-width="1.350"/></svg>
<svg style="left:71px;top:12px" width="15" height="15" viewBox="0 0 15 15"><path d="M12 7.500a4.600 4.600 0 1 1-1.500-3.400" fill="none" stroke="#3b3640" stroke-width="1.400"/><path d="M12.300 1.800v3.700H8.600z" fill="#3b3640"/></svg>
<div class="abs" style="left:100px;top:5.200px;width:1201.500px;height:28.200px;border-radius:14px;background:#ede6f3"></div>
<div class="abs" style="left:104.300px;top:9.500px;width:19.600px;height:19.600px;border-radius:50%;background:#67509a"></div>
<svg style="left:108.600px;top:14px" width="11" height="11" viewBox="0 0 11 11"><rect x="4.100" y="1" width="2.800" height="5.400" rx="1.400" fill="#f3eafc"/><path d="M2.600 5.200a2.900 2.900 0 0 0 5.800 0M5.500 8.200v1.800" fill="none" stroke="#f3eafc" stroke-width=".9"/></svg>
<div class="t" style="left:131.300px;top:14.300px;font-size:11.850px;color:#1f1c24">meet.google.com<span style="color:#615c68">/ynv-paip-jei</span></div>
<svg style="left:1274.500px;top:12px" width="15" height="15" viewBox="0 0 15 15"><path d="M7.500 1.900l1.700 3.700 4 .4-3 2.700.9 3.900-3.600-2.100-3.600 2.100.9-3.900-3-2.700 4-.4z" fill="none" stroke="#3b3640" stroke-width="1.200" stroke-linejoin="round"/></svg>
<svg style="left:1315.500px;top:11px" width="17" height="17" viewBox="0 0 17 17"><path d="M2.500 5.500h3.600v-.8a1.700 1.700 0 0 1 3.400 0v.8h3.200v3.200h.8a1.700 1.700 0 0 1 0 3.400h-.8v3.100H2.500v-3.100h.6a1.650 1.650 0 0 0 0-3.300h-.6z" fill="none" stroke="#3b3640" stroke-width="1.450" stroke-linejoin="round"/></svg>
<div class="abs" style="left:1345px;top:13px;width:1.200px;height:12.500px;background:#dccff0"></div>
<div class="abs" style="left:1354px;top:5.300px;width:69px;height:28px;border-radius:14px;background:#eadcfb"></div>
<div class="abs" style="left:1362.500px;top:11px;width:16.500px;height:17px;border-radius:50%;overflow:hidden;background:#cdb39c"><div class="abs" style="left:2px;top:0;width:12px;height:17px;border-radius:50%;background:#6b4432"></div><div class="abs" style="left:5.500px;top:3.500px;width:7.500px;height:9px;border-radius:50%;background:#eac3a8"></div><div class="abs" style="left:4px;top:12px;width:11px;height:8px;border-radius:40%;background:#e9ddd6"></div></div>
<div class="t" style="left:1384.300px;top:14.700px;font-size:9.700px;color:#2c2149;letter-spacing:-.05px">Освіта</div>
<div class="abs" style="left:1428px;top:5.300px;width:167px;height:28px;border-radius:14px;background:#eadcfb"></div>
<div class="t" style="left:1437.600px;top:14.600px;font-size:9.900px;color:#2c2149">Перезапустити, щоб оновити</div>
<svg style="left:1579.500px;top:12.500px" width="4" height="14" viewBox="0 0 4 14"><circle cx="2" cy="2.200" r="1.250" fill="#2c2149"/><circle cx="2" cy="7" r="1.250" fill="#2c2149"/><circle cx="2" cy="11.800" r="1.250" fill="#2c2149"/></svg>
</div>
<div id="infobar">
<svg style="left:14px;top:12.500px" width="16" height="15" viewBox="0 0 16 15"><rect x="1.800" y="1.700" width="12.400" height="8.600" rx="1" fill="none" stroke="#3d3a42" stroke-width="1.200"/><path d="M.5 13h15" stroke="#3d3a42" stroke-width="1.200"/><path d="M5.400 8.200c.2-1.700 1.300-2.500 3.200-2.600V4.200l2.400 2.300-2.400 2.300V7.400c-1.400 0-2.400.2-3.200.8z" fill="#3d3a42"/></svg>
<div class="t" style="left:43.500px;top:16.100px;font-size:10.650px;color:#36333b">Цій вкладці надано доступ до вкладки "</div>
<div class="abs" style="left:242.500px;top:11.500px;width:71px;height:20px;border-radius:10px;background:#f1e9f8"></div>
<div class="t" style="left:248.300px;top:17px;font-size:9.200px;color:#4e3a7a">iq.vntu.edu.ua</div>
<div class="t" style="left:315.500px;top:16.100px;font-size:10.650px;color:#36333b">"</div>
<div class="abs" style="left:332.500px;top:14.500px;width:1px;height:15px;background:#e6ddef"></div>
<div class="abs" style="left:343px;top:5.500px;width:125px;height:30.500px;border-radius:15.500px;background:#664d93"></div>
<div class="t" style="left:343px;width:125px;text-align:center;top:16px;font-size:10px;font-weight:700;color:#fff">Більше не ділитися</div>
</div>
<div class="abs" style="left:13px;top:129px;width:1472px;height:33.500px;border-radius:9px;background:#3c4043"></div>
<svg style="left:26.500px;top:137.500px" width="20" height="16" viewBox="0 0 20 16"><rect x="1" y="1" width="18" height="14" rx="1.200" fill="none" stroke="#fff" stroke-width="1.700"/><path d="M10 4.200l3.300 3.300h-2.200v3.600H8.900V7.500H6.700z" fill="#fff"/></svg>
<div class="t" style="left:60px;top:139.600px;font-size:11.700px;font-weight:700;color:#fff;letter-spacing:-.077px">Бондар Альона Василівна (ви ведете презентацію, додаєте примітки)</div>
<div class="abs" style="left:476px;top:139.500px;width:1px;height:12.500px;background:#5f6368"></div>
<div class="t" style="left:489.600px;top:139.600px;font-size:11.700px;font-weight:700;color:#fff;letter-spacing:-.02px">Звук презентації</div>
<div class="abs" style="left:599px;top:136px;width:33px;height:19.500px;border-radius:10px;background:#a8c7fa"></div>
<div class="abs" style="left:613.800px;top:137.900px;width:15.600px;height:15.600px;border-radius:50%;background:#062e6f"></div>
<svg style="left:616.800px;top:141.200px" width="10" height="9" viewBox="0 0 10 9"><path d="M1 3.200h1.800L5 1.200v6.600L2.800 5.800H1z" fill="#a8c7fa"/><path d="M6.200 2.600a2.600 2.600 0 0 1 0 3.800M7.300 1.300a4.300 4.300 0 0 1 0 6.400" fill="none" stroke="#a8c7fa" stroke-width=".8"/></svg>
<div class="abs" style="left:1351.500px;top:133px;width:127px;height:25.500px;border-radius:13px;background:#a8c7fa"></div>
<div class="t" style="left:1351.500px;width:127px;text-align:center;top:137.700px;font-size:12.200px;line-height:9.600px;color:#17367a;-webkit-text-stroke:.25px #17367a;white-space:normal">Зупинити<br>презентацію</div>
<div class="abs" style="left:1498.400px;top:130.200px;width:29.400px;height:29.400px;border-radius:50%;background:#292a2d"></div>
<svg style="left:1505px;top:137px" width="17" height="16" viewBox="0 0 17 16"><path d="M2 3h6v3h7v9H2z" fill="#f6d3c4"/><path d="M3.500 5h1.600v1.600H3.500zM3.500 8h1.600v1.600H3.500zM3.500 11h1.600v1.600H3.500zM6 8h1.600v1.600H6zM6 11h1.600v1.600H6zM10 8.500h1.600v1.600H10zM10 11.500h1.600v1.600H10zM12.600 8.500h1.200v1.600h-1.200z" fill="#292a2d"/><path d="M.8 1.200l15 14" stroke="#292a2d" stroke-width="2.600"/><path d="M1.400.6l15 14" stroke="#f6d3c4" stroke-width="1.300"/></svg>
<div class="abs" style="left:1534.700px;top:130.200px;width:52.200px;height:29.400px;border-radius:15px;background:#292a2d"></div>
<div class="abs" style="left:1540.600px;top:134.300px;width:11.500px;height:11.500px;border-radius:50%;background:radial-gradient(circle at 55% 45%,#efcdb8 0 38%,#7b4a38 42% 100%)"></div>
<div class="abs" style="left:1553.400px;top:137.300px;width:5.400px;height:5.400px;border-radius:50%;background:#cdb89a"></div>
<div class="abs" style="left:1542.500px;top:147.600px;width:6.600px;height:6.600px;border-radius:50%;background:#d9bdb2"></div>
<div class="abs" style="left:1551.300px;top:145.200px;width:9px;height:9px;border-radius:50%;background:#0b57b0"></div>
<div class="t" style="left:1551.300px;width:9px;text-align:center;top:147.300px;font-size:5px;font-weight:700;color:#dce8fb">Д</div>
<div class="t" style="left:1566px;width:13px;text-align:center;top:140px;font-size:10.500px;font-weight:700;color:#fff;letter-spacing:-.3px">11</div>
<div class="abs" style="left:14px;top:203.500px;width:1147px;height:569px;border-radius:9px;background:#282828;overflow:hidden">
<div class="abs" style="left:0;top:0;width:1147px;height:33.300px;background:#3c3c3c"></div>
<div class="abs" style="left:0;top:33.300px;width:169.300px;height:536px;background:#292a2d"></div>
<svg style="left:13.0px;top:12.5px" width="10" height="8" viewBox="0 0 10 8"><path d="M.5 1.300h9M.5 4h9M.5 6.700h9" stroke="#e3e3e3" stroke-width="1"/></svg>
<div class="t" style="left:37.5px;top:12.5px;font-size:8.400px;font-weight:700;color:#eee;letter-spacing:-.12px">getfile.php</div>
<div class="abs" style="left:452.8px;top:10.3px;width:15.500px;height:12.500px;background:#191b1c"></div>
<div class="t" style="left:452.8px;top:12.5px;width:15.500px;text-align:center;font-size:8.600px;color:#fff">1</div>
<div class="t" style="left:469.7px;top:12.5px;font-size:8.600px;color:#e6e6e6">/&nbsp; 9</div>
<div class="abs" style="left:496.4px;top:10.0px;width:1px;height:13px;background:#5a5a5a"></div>
<div class="abs" style="left:571.4px;top:10.0px;width:1px;height:13px;background:#5a5a5a"></div>
<div class="abs" style="left:624.6px;top:10.0px;width:1px;height:13px;background:#5a5a5a"></div>
<div class="abs" style="left:651.4px;top:10.0px;width:1px;height:13px;background:#5a5a5a"></div>
<svg style="left:504.6px;top:12.5px" width="8" height="8" viewBox="0 0 8 8"><path d="M.8 4h6.400" stroke="#e3e3e3" stroke-width="1"/></svg>
<div class="abs" style="left:520.8px;top:10.3px;width:26.500px;height:12.500px;background:#191b1c"></div>
<div class="t" style="left:520.8px;top:12.7px;width:26.500px;text-align:center;font-size:8.300px;color:#fff;letter-spacing:-.2px">100%</div>
<svg style="left:554.6px;top:12.5px" width="8" height="8" viewBox="0 0 8 8"><path d="M.8 4h6.400M4 .8v6.400" stroke="#e3e3e3" stroke-width="1"/></svg>
<svg style="left:583.5px;top:11.0px" width="9" height="11" viewBox="0 0 9 11"><rect x="1" y=".8" width="7" height="9.400" rx="1" fill="none" stroke="#e3e3e3" stroke-width="1"/><path d="M4.500 2.300v2.200M4.500 6.500v2.200M3.400 3.300l1.100-1.100 1.100 1.100M3.400 7.700l1.100 1.100 1.100-1.100" fill="none" stroke="#e3e3e3" stroke-width=".7"/></svg>
<svg style="left:601.5px;top:11.0px" width="12" height="11" viewBox="0 0 12 11"><path d="M6.500 1.600a4 4 0 1 1-2.800 6.800" fill="none" stroke="#e3e3e3" stroke-width="1"/><path d="M7 0L5 1.700 7 3.400z" fill="#e3e3e3"/><rect x="1.700" y="3.700" width="3.600" height="3.600" transform="rotate(45 3.500 5.500)" fill="none" stroke="#e3e3e3" stroke-width=".9"/></svg>
<svg style="left:632.0px;top:11.5px" width="11" height="10" viewBox="0 0 11 10"><path d="M1.500 5.500C1 2.500 2 .9 3.200 1.100c1.300.3 1 3-.2 5.200-.6 1.300.1 2 .9 1.300C5 6.600 5 5.200 6 5c.8-.2.800 1 .7 1.800" fill="none" stroke="#e3e3e3" stroke-width="1"/><path d="M6.800 8.800l.4-1.500 2.300-2.300 1.100 1.100-2.300 2.300z" fill="#e3e3e3"/></svg>
<svg style="left:660.5px;top:12.0px" width="9" height="9" viewBox="0 0 9 9"><path d="M1.500 3.200h4a2.300 2.300 0 0 1 0 4.600H3" fill="none" stroke="#6c6c6c" stroke-width="1"/><path d="M3.200 1.400L1.400 3.200 3.200 5" fill="none" stroke="#6c6c6c" stroke-width="1"/></svg>
<svg style="left:679.5px;top:12.0px" width="9" height="9" viewBox="0 0 9 9"><path d="M7.500 3.200h-4a2.300 2.300 0 0 0 0 4.600H6" fill="none" stroke="#6c6c6c" stroke-width="1"/><path d="M5.800 1.400L7.600 3.200 5.800 5" fill="none" stroke="#6c6c6c" stroke-width="1"/></svg>
<svg style="left:1057.5px;top:11.0px" width="12" height="11" viewBox="0 0 12 11"><path d="M4.300 1h3l3.600 6.200-1 1.800M4.300 1L.8 7.200l1.500 2.600h4.200" fill="none" stroke="#e3e3e3" stroke-width="1"/><path d="M4.600 6.800L6 4.400l1.400 2.400z" fill="none" stroke="#e3e3e3" stroke-width=".8"/><path d="M9.500 7v3.600M7.700 8.800h3.600" stroke="#e3e3e3" stroke-width="1"/></svg>
<svg style="left:1079.5px;top:10.8px" width="10" height="11" viewBox="0 0 10 11"><path d="M5 .8v6M2.400 4.400L5 7l2.600-2.600M1 8v1.800h8V8" fill="none" stroke="#e3e3e3" stroke-width="1.100"/></svg>
<svg style="left:1100.5px;top:11.0px" width="12" height="11" viewBox="0 0 12 11"><rect x="1" y="3.600" width="10" height="4.600" rx="1.200" fill="none" stroke="#e3e3e3" stroke-width="1.100"/><path d="M3.200 3.400V1h5.600v2.400M3.200 6.800h5.600V10H3.200z" fill="#3c3c3c" stroke="#e3e3e3" stroke-width="1.100"/></svg>
<svg style="left:1126.7px;top:11.5px" width="3" height="10" viewBox="0 0 3 10"><circle cx="1.500" cy="1.500" r=".9" fill="#e3e3e3"/><circle cx="1.500" cy="5" r=".9" fill="#e3e3e3"/><circle cx="1.500" cy="8.500" r=".9" fill="#e3e3e3"/></svg>
<div class="abs" style="left:169.3px;top:33.300px;width:10px;height:536px;background:#fafafa"></div>
<div class="abs" style="left:171.8px;top:44.8px;width:5px;height:250px;border-radius:3px;background:#8f8f8f"></div>
<svg style="left:171.3px;top:36.5px" width="6" height="4" viewBox="0 0 6 4"><path d="M0 3.500L3 .5l3 3z" fill="#555"/></svg>
<svg style="left:171.3px;top:561.5px" width="6" height="4" viewBox="0 0 6 4"><path d="M0 .5L3 3.500l3-3z" fill="#555"/></svg>
<div class="abs" style="left:1138.2px;top:33.300px;width:9px;height:536px;background:#fafafa"></div>
<div class="abs" style="left:1140.2px;top:49.2px;width:5px;height:45px;border-radius:3px;background:#8f8f8f"></div>
<svg style="left:1139.7px;top:36.5px" width="6" height="4" viewBox="0 0 6 4"><path d="M0 3.500L3 .5l3 3z" fill="#555"/></svg>
<svg style="left:1139.7px;top:561.5px" width="6" height="4" viewBox="0 0 6 4"><path d="M0 .5L3 3.500l3-3z" fill="#555"/></svg>
<div class="abs" style="left:420.6px;top:33.300px;width:475px;height:540px;background:#fff"></div>
<div class="abs" style="left:48.7px;top:43.8px;width:72.300px;height:98.400px;background:#8ab0f2"></div>
<div class="abs" style="left:52.7px;top:47.7px;width:64.500px;height:90.800px;background:#fff;overflow:hidden">
<div class="abs" style="left:19.2px;top:6.3px;width:30.6px;height:1.1px;background:rgba(30,30,30,0.62)"></div><div class="abs" style="left:15.1px;top:8.1px;width:38.8px;height:1.1px;background:rgba(30,30,30,0.36)"></div><div class="abs" style="left:15.1px;top:9.9px;width:38.8px;height:1.1px;background:rgba(30,30,30,0.36)"></div><div class="abs" style="left:21.9px;top:16.9px;width:25.2px;height:1.1px;background:rgba(30,30,30,0.62)"></div><div class="abs" style="left:24.6px;top:20.5px;width:19.7px;height:1.1px;background:rgba(30,30,30,0.36)"></div><div class="abs" style="left:9.0px;top:24.0px;width:29.9px;height:1.1px;background:rgba(30,30,30,0.50)"></div><div class="abs" style="left:9.0px;top:25.8px;width:36.0px;height:1.1px;background:rgba(30,30,30,0.50)"></div><div class="abs" style="left:9.0px;top:27.6px;width:51.0px;height:1.1px;background:rgba(30,30,30,0.50)"></div><div class="abs" style="left:9.0px;top:29.3px;width:4.8px;height:1.1px;background:rgba(30,30,30,0.62)"></div><div class="abs" style="left:9.0px;top:32.9px;width:25.2px;height:1.1px;background:rgba(30,30,30,0.50)"></div><div class="abs" style="left:9.0px;top:36.4px;width:18.4px;height:1.1px;background:rgba(30,30,30,0.50)"></div><div class="abs" style="left:9.0px;top:38.2px;width:7.5px;height:1.1px;background:rgba(30,30,30,0.50)"></div><div class="abs" style="left:9.0px;top:40.0px;width:12.9px;height:1.1px;background:rgba(30,30,30,0.50)"></div><div class="abs" style="left:9.0px;top:41.7px;width:27.2px;height:1.1px;background:rgba(30,30,30,0.50)"></div><div class="abs" style="left:9.0px;top:43.5px;width:29.2px;height:1.1px;background:rgba(30,30,30,0.50)"></div><div class="abs" style="left:9.0px;top:45.3px;width:34.7px;height:1.1px;background:rgba(30,30,30,0.50)"></div><div class="abs" style="left:9.0px;top:47.0px;width:23.1px;height:1.1px;background:rgba(30,30,30,0.36)"></div><div class="abs" style="left:9.0px;top:50.6px;width:51.0px;height:1.1px;background:rgba(30,30,30,0.50)"></div><div class="abs" style="left:9.0px;top:52.4px;width:51.0px;height:1.1px;background:rgba(30,30,30,0.36)"></div><div class="abs" style="left:9.0px;top:54.1px;width:51.0px;height:1.1px;background:rgba(30,30,30,0.36)"></div><div class="abs" style="left:9.0px;top:55.9px;width:28.6px;height:1.1px;background:rgba(30,30,30,0.36)"></div><div class="abs" style="left:9.0px;top:59.4px;width:51.0px;height:1.1px;background:rgba(30,30,30,0.50)"></div><div class="abs" style="left:9.0px;top:61.2px;width:51.0px;height:1.1px;background:rgba(30,30,30,0.36)"></div><div class="abs" style="left:9.0px;top:63.0px;width:51.0px;height:1.1px;background:rgba(30,30,30,0.36)"></div><div class="abs" style="left:9.0px;top:64.7px;width:51.0px;height:1.1px;background:rgba(30,30,30,0.36)"></div><div class="abs" style="left:9.0px;top:66.5px;width:51.0px;height:1.1px;background:rgba(30,30,30,0.36)"></div><div class="abs" style="left:9.0px;top:68.3px;width:51.0px;height:1.1px;background:rgba(30,30,30,0.36)"></div><div class="abs" style="left:9.0px;top:70.0px;width:51.0px;height:1.1px;background:rgba(30,30,30,0.36)"></div><div class="abs" style="left:9.0px;top:71.8px;width:8.2px;height:1.1px;background:rgba(30,30,30,0.36)"></div><div class="abs" style="left:12.1px;top:75.4px;width:44.9px;height:1.1px;background:rgba(30,30,30,0.62)"></div><div class="abs" style="left:28.0px;top:77.1px;width:12.9px;height:1.1px;background:rgba(30,30,30,0.62)"></div><div class="abs" style="left:12.7px;top:78.9px;width:25.8px;height:1.1px;background:rgba(30,30,30,0.36)"></div><div class="abs" style="left:9.0px;top:80.7px;width:48.3px;height:1.1px;background:rgba(30,30,30,0.50)"></div><div class="abs" style="left:9.0px;top:82.4px;width:51.0px;height:1.1px;background:rgba(30,30,30,0.36)"></div><div class="abs" style="left:9.0px;top:84.2px;width:51.0px;height:1.1px;background:rgba(30,30,30,0.62)"></div>
</div>
<div class="t" style="left:74.3px;top:146.4px;width:20px;text-align:center;font-size:8.400px;color:#e8e8e8">1</div>
<div class="abs" style="left:52.7px;top:167.7px;width:64.500px;height:90.800px;background:#fff;overflow:hidden">
<div class="abs" style="left:9.0px;top:9.0px;width:51px;height:1px;background:rgba(40,40,40,0.42)"></div><div class="abs" style="left:9.0px;top:10.9px;width:51px;height:1px;background:rgba(40,40,40,0.22)"></div><div class="abs" style="left:9.0px;top:12.8px;width:51px;height:1px;background:rgba(40,40,40,0.28)"></div><div class="abs" style="left:9.0px;top:16.6px;width:51px;height:1px;background:rgba(40,40,40,0.28)"></div><div class="abs" style="left:9.0px;top:20.4px;width:51px;height:1px;background:rgba(40,40,40,0.28)"></div><div class="abs" style="left:9.0px;top:22.3px;width:51px;height:1px;background:rgba(40,40,40,0.42)"></div><div class="abs" style="left:9.0px;top:26.1px;width:51px;height:1px;background:rgba(40,40,40,0.28)"></div><div class="abs" style="left:9.0px;top:28.0px;width:51px;height:1px;background:rgba(40,40,40,0.22)"></div><div class="abs" style="left:9.0px;top:29.9px;width:51px;height:1px;background:rgba(40,40,40,0.28)"></div><div class="abs" style="left:9.0px;top:33.7px;width:51px;height:1px;background:rgba(40,40,40,0.32)"></div><div class="abs" style="left:9.0px;top:37.5px;width:51px;height:1px;background:rgba(40,40,40,0.28)"></div><div class="abs" style="left:9.0px;top:39.4px;width:51px;height:1px;background:rgba(40,40,40,0.42)"></div><div class="abs" style="left:22.0px;top:41.3px;width:22px;height:1px;background:rgba(40,40,40,0.42)"></div><div class="abs" style="left:9.0px;top:43.2px;width:51px;height:1px;background:rgba(40,40,40,0.28)"></div><div class="abs" style="left:9.0px;top:45.1px;width:51px;height:1px;background:rgba(40,40,40,0.22)"></div><div class="abs" style="left:9.0px;top:47.0px;width:51px;height:1px;background:rgba(40,40,40,0.42)"></div><div class="abs" style="left:9.0px;top:48.9px;width:22px;height:1px;background:rgba(40,40,40,0.22)"></div><div class="abs" style="left:9.0px;top:52.7px;width:44px;height:1px;background:rgba(40,40,40,0.28)"></div><div class="abs" style="left:9.0px;top:54.6px;width:30px;height:1px;background:rgba(40,40,40,0.22)"></div><div class="abs" style="left:9.0px;top:56.5px;width:51px;height:1px;background:rgba(40,40,40,0.32)"></div><div class="abs" style="left:9.0px;top:58.4px;width:44px;height:1px;background:rgba(40,40,40,0.42)"></div><div class="abs" style="left:9.0px;top:60.3px;width:22px;height:1px;background:rgba(40,40,40,0.22)"></div><div class="abs" style="left:22.0px;top:62.2px;width:22px;height:1px;background:rgba(40,40,40,0.22)"></div><div class="abs" style="left:9.0px;top:66.0px;width:22px;height:1px;background:rgba(40,40,40,0.42)"></div><div class="abs" style="left:9.0px;top:67.9px;width:44px;height:1px;background:rgba(40,40,40,0.22)"></div><div class="abs" style="left:9.0px;top:69.8px;width:44px;height:1px;background:rgba(40,40,40,0.28)"></div><div class="abs" style="left:9.0px;top:71.7px;width:22px;height:1px;background:rgba(40,40,40,0.32)"></div><div class="abs" style="left:9.0px;top:73.6px;width:51px;height:1px;background:rgba(40,40,40,0.42)"></div><div class="abs" style="left:9.0px;top:75.5px;width:22px;height:1px;background:rgba(40,40,40,0.42)"></div><div class="abs" style="left:9.0px;top:77.4px;width:51px;height:1px;background:rgba(40,40,40,0.28)"></div><div class="abs" style="left:9.0px;top:79.3px;width:51px;height:1px;background:rgba(40,40,40,0.32)"></div>
</div>
<div class="t" style="left:74.3px;top:266.4px;width:20px;text-align:center;font-size:8.400px;color:#e8e8e8">2</div>
<div class="abs" style="left:52.7px;top:287.7px;width:64.500px;height:90.800px;background:#fff;overflow:hidden">
<div class="abs" style="left:9.0px;top:9.0px;width:44px;height:1px;background:rgba(40,40,40,0.42)"></div><div class="abs" style="left:9.0px;top:10.9px;width:51px;height:1px;background:rgba(40,40,40,0.22)"></div><div class="abs" style="left:9.0px;top:12.8px;width:51px;height:1px;background:rgba(40,40,40,0.28)"></div><div class="abs" style="left:9.0px;top:16.6px;width:51px;height:1px;background:rgba(40,40,40,0.32)"></div><div class="abs" style="left:9.0px;top:18.5px;width:51px;height:1px;background:rgba(40,40,40,0.42)"></div><div class="abs" style="left:9.0px;top:20.4px;width:44px;height:1px;background:rgba(40,40,40,0.28)"></div><div class="abs" style="left:9.0px;top:22.3px;width:51px;height:1px;background:rgba(40,40,40,0.22)"></div><div class="abs" style="left:9.0px;top:24.2px;width:51px;height:1px;background:rgba(40,40,40,0.42)"></div><div class="abs" style="left:9.0px;top:26.1px;width:30px;height:1px;background:rgba(40,40,40,0.22)"></div><div class="abs" style="left:9.0px;top:28.0px;width:30px;height:1px;background:rgba(40,40,40,0.22)"></div><div class="abs" style="left:9.0px;top:29.9px;width:51px;height:1px;background:rgba(40,40,40,0.42)"></div><div class="abs" style="left:9.0px;top:31.8px;width:44px;height:1px;background:rgba(40,40,40,0.22)"></div><div class="abs" style="left:9.0px;top:35.6px;width:51px;height:1px;background:rgba(40,40,40,0.22)"></div><div class="abs" style="left:9.0px;top:37.5px;width:51px;height:1px;background:rgba(40,40,40,0.22)"></div><div class="abs" style="left:9.0px;top:39.4px;width:30px;height:1px;background:rgba(40,40,40,0.28)"></div><div class="abs" style="left:9.0px;top:41.3px;width:44px;height:1px;background:rgba(40,40,40,0.32)"></div><div class="abs" style="left:9.0px;top:43.2px;width:51px;height:1px;background:rgba(40,40,40,0.42)"></div><div class="abs" style="left:9.0px;top:45.1px;width:22px;height:1px;background:rgba(40,40,40,0.32)"></div><div class="abs" style="left:9.0px;top:50.8px;width:51px;height:1px;background:rgba(40,40,40,0.42)"></div><div class="abs" style="left:9.0px;top:52.7px;width:51px;height:1px;background:rgba(40,40,40,0.22)"></div><div class="abs" style="left:9.0px;top:54.6px;width:51px;height:1px;background:rgba(40,40,40,0.32)"></div><div class="abs" style="left:9.0px;top:56.5px;width:51px;height:1px;background:rgba(40,40,40,0.22)"></div><div class="abs" style="left:9.0px;top:58.4px;width:51px;height:1px;background:rgba(40,40,40,0.22)"></div><div class="abs" style="left:9.0px;top:60.3px;width:51px;height:1px;background:rgba(40,40,40,0.32)"></div><div class="abs" style="left:9.0px;top:62.2px;width:44px;height:1px;background:rgba(40,40,40,0.28)"></div><div class="abs" style="left:9.0px;top:64.1px;width:51px;height:1px;background:rgba(40,40,40,0.32)"></div><div class="abs" style="left:9.0px;top:66.0px;width:51px;height:1px;background:rgba(40,40,40,0.28)"></div><div class="abs" style="left:9.0px;top:67.9px;width:51px;height:1px;background:rgba(40,40,40,0.28)"></div><div class="abs" style="left:9.0px;top:69.8px;width:44px;height:1px;background:rgba(40,40,40,0.22)"></div><div class="abs" style="left:9.0px;top:71.7px;width:51px;height:1px;background:rgba(40,40,40,0.42)"></div><div class="abs" style="left:9.0px;top:73.6px;width:44px;height:1px;background:rgba(40,40,40,0.42)"></div><div class="abs" style="left:9.0px;top:75.5px;width:44px;height:1px;background:rgba(40,40,40,0.32)"></div><div class="abs" style="left:9.0px;top:81.2px;width:44px;height:1px;background:rgba(40,40,40,0.28)"></div>
</div>
<div class="t" style="left:74.3px;top:386.4px;width:20px;text-align:center;font-size:8.400px;color:#e8e8e8">3</div>
<div class="abs" style="left:52.7px;top:407.7px;width:64.500px;height:90.800px;background:#fff;overflow:hidden">
<div class="abs" style="left:9px;top:9px;width:51px;height:25px;border:1px solid #555;background:repeating-linear-gradient(#fff 0 2.400px,#777 2.400px 3.200px)"></div>
<div class="abs" style="left:9px;top:42px;width:51px;height:25px;border:1px solid #555;background:repeating-linear-gradient(#fff 0 2.400px,#777 2.400px 3.200px)"></div>
<div class="abs" style="left:7px;top:74px;width:54px;height:9px;border:1px solid #555;background:repeating-linear-gradient(#fff 0 2.400px,#888 2.400px 3.200px)"></div>
<div class="abs" style="left:45px;top:9px;width:1px;height:25px;background:#555"></div><div class="abs" style="left:52px;top:9px;width:1px;height:25px;background:#555"></div><div class="abs" style="left:52px;top:42px;width:1px;height:25px;background:#555"></div><div class="abs" style="left:56px;top:42px;width:1px;height:25px;background:#555"></div>
</div>
<div class="t" style="left:74.3px;top:506.4px;width:20px;text-align:center;font-size:8.400px;color:#e8e8e8">4</div>
<div class="abs" style="left:52.7px;top:527.7px;width:64.500px;height:90.800px;background:#fff;overflow:hidden">
<div class="abs" style="left:7px;top:6px;width:54px;height:6px;border:1px solid #555;background:repeating-linear-gradient(#fff 0 1.600px,#777 1.600px 2.400px)"></div>
<div class="abs" style="left:9px;top:15.0px;width:28px;height:1px;background:rgba(40,40,40,.38)"></div>
<div class="abs" style="left:9px;top:17.3px;width:46px;height:1px;background:rgba(40,40,40,.38)"></div>
<div class="abs" style="left:9px;top:19.6px;width:28px;height:1px;background:rgba(40,40,40,.38)"></div>
<div class="abs" style="left:9px;top:21.9px;width:40px;height:1px;background:rgba(40,40,40,.38)"></div>
<div class="abs" style="left:9px;top:24.2px;width:46px;height:1px;background:rgba(40,40,40,.38)"></div>
<div class="abs" style="left:9px;top:26.5px;width:46px;height:1px;background:rgba(40,40,40,.38)"></div>
<div class="abs" style="left:9px;top:28.8px;width:28px;height:1px;background:rgba(40,40,40,.38)"></div>
<div class="abs" style="left:9px;top:31.1px;width:46px;height:1px;background:rgba(40,40,40,.38)"></div>
<div class="abs" style="left:9px;top:33.4px;width:28px;height:1px;background:rgba(40,40,40,.38)"></div>
<div class="abs" style="left:9px;top:35.7px;width:46px;height:1px;background:rgba(40,40,40,.38)"></div>
</div>
<div class="abs" style="left:1001.0px;top:522.0px;width:141px;height:41px;border-radius:21px;background:#1f1f20"></div>
<div class="abs" style="left:1004.2px;top:525.5px;width:53.500px;height:33.500px;border-radius:17px;background:#9eb9e8"></div>
<svg style="left:1017.0px;top:532.0px" width="16" height="20" viewBox="0 0 16 20"><path d="M11.500 1.500L3 8h8.500l-6 5.500" fill="none" stroke="#0a2a6b" stroke-width="2.400" stroke-linejoin="miter"/><circle cx="4.200" cy="16.200" r="2.700" fill="#0a2a6b"/></svg>
<svg style="left:1043.5px;top:539.5px" width="8" height="5" viewBox="0 0 8 5"><path d="M0 4.500L4 .5l4 4z" fill="#0a2a6b"/></svg>
<div class="abs" style="left:1064.2px;top:525.5px;width:33.500px;height:33.500px;border-radius:50%;background:#333537"></div>
<svg style="left:1074.0px;top:535.0px" width="14" height="15" viewBox="0 0 14 15"><path d="M4.300 8V1.800M1.600 4.400L4.300 1.700 7 4.400M9.700 6.500v6.700M7 10.600l2.700 2.700 2.700-2.700" fill="none" stroke="#e3e3e3" stroke-width="1.700"/></svg>
<div class="abs" style="left:1104.2px;top:525.5px;width:33.500px;height:33.500px;border-radius:50%;background:#333537"></div>
<svg style="left:1113.5px;top:534.8px" width="15" height="15" viewBox="0 0 15 15"><path d="M2 13L13 2M8.200 1.800h5v5M6.800 13.200h-5v-5" fill="none" stroke="#e3e3e3" stroke-width="1.600"/></svg>
</div>
<div id="doc">
<div class="c">Факультет будівництва, цивільної та екологічної інженерії</div>
<div class="c">Кафедра будівництва, міського господарства та архітектури</div>
<div></div>
<div></div>
<div></div>
<div class="c"><b>СУЧАСНІ ДОРОЖНЬО-БУДІВЕЛЬНІ МАТЕРІАЛИ</b></div>
<div></div>
<div class="c">Вибірковий освітній компонент</div>
<div></div>
<div class="l">Рівень вищої освіти – <b>перший</b> (бакалаврський)</div>
<div class="l">Спеціальність – <b>G19 Будівництво та цивільна інженерія</b></div>
<div class="jj" style="word-spacing:-0.299px"><span>Освітня програма – <b>Автомобільні дороги, вулиці та дорожньо-транспортні</b></span></div>
<div class="l"><b>споруди</b></div>
<div></div>
<div class="l">Викладачі: <b>к.т.н., доцент Бондар А.В.</b></div>
<div></div>
<div class="l">Мова викладання: <b>українська</b></div>
<div class="l">Семестр – <b>4</b></div>
<div class="l">Кредитів ЕКТС – <b>5,0</b></div>
<div class="l">Лекцій – <b>36 год. д.ф.н. / 10 год. з.ф.н.</b></div>
<div class="l">Практичних – <b>27 год. д.ф.н. / 5 год. з.ф.н.</b></div>
<div class="l">Самостійна робота – <b>87 год. д.ф.н./ 135 год. з.ф.н.</b></div>
<div class="l">Вид контролю – диференційний залік</div>
<div></div>
<div class="jj" style="word-spacing:-0.370px"><span><b>Мета вивчення дисципліни:</b> отримання майбутніми фахівцями теоретичних</span></div>
<div class="jj" style="word-spacing:6.188px"><span>і практичних знань з основ виготовлення та застосування сучасних</span></div>
<div class="jj" style="word-spacing:-0.846px"><span>будівельних матеріалів з високими фізико-механічними характеристиками для</span></div>
<div class="l">будівництва і ремонту автомобільних доріг.</div>
<div></div>
<div class="jj" style="word-spacing:5.694px"><span><b>Основні завдання,</b> що вирішуються в процесі вивчення дисципліни,</span></div>
<div class="jj" style="word-spacing:3.947px"><span>спрямовані на формування у здобувачів вищої освіти комплексу знань,</span></div>
<div class="jj" style="word-spacing:5.840px"><span>навичок та уявлень щодо основ формування структури, хімічний та</span></div>
<div class="jj" style="word-spacing:4.660px"><span>мінералогічний склад компонентів композиційних дорожньо-будівельних</span></div>
<div class="jj" style="word-spacing:4.049px"><span>матеріалів, а також їх взаємодію у сумішах для оптимального підбору</span></div>
<div class="jj" style="word-spacing:1.905px"><span>основних матеріалів для дорожніх одягів та основ доріг, що забезпечують</span></div>
<div class="jj" style="word-spacing:0.322px"><span>нормативні транспортноексплуатаційні показники та довговічність дорожніх</span></div>
<div class="l">конструкцій.</div>
<div></div>
<div class="c"><b>1.&nbsp;&nbsp; Компетентності, якими повинен оволодіти здобувач в результаті</b></div>
<div class="c"><b>вивчення дисципліни</b></div>
<div style="padding-left:27.500px">Загальні та спеціальні компетентності:</div>
<div class="l"><b>ЗК02.</b> Знання та розуміння предметної області та професійної діяльності.</div>
</div>
<div class="abs" style="left:14px;top:772.500px;width:1200px;height:28px;background:#131314"></div>
<div class="tile" style="left:1175.2px;top:217.0px;width:130.7px;height:173.6px;background:radial-gradient(circle farthest-corner at 50% 36%,#7a4640,#54272a);"><div class="av" style="left:35.4px;top:56.8px;width:60.5px;height:60.5px"><svg style="left:0;top:0" width="60.5" height="60.5" viewBox="0 0 60 60"><filter id="bl7" x="-10%" y="-10%" width="120%" height="120%"><feGaussianBlur stdDeviation="0.60"/></filter><g filter="url(#bl7)"><rect x="-3" y="-3" width="66" height="66" fill="#e4e2dc"/><path d="M-2 18l6-2 3 46H-2z" fill="#dcb88e"/><path d="M50 12l7 3-5 22-7-2z" fill="#d9b189"/><path d="M56 16l6 2v20l-9-1z" fill="#e6d5bd"/><rect x="44" y="35" width="20" height="4" fill="#e9d65a"/><rect x="44" y="39" width="20" height="9" fill="#67b9a0"/><rect x="44" y="33" width="20" height="2.500" fill="#d8c7a0"/><path d="M-2 52l14-9 8 3 10 8 9-8 9-9 14 10v16H-2z" fill="#14151a"/><path d="M21 40h18l-2 9-7 5-7-5z" fill="#d3a088"/><ellipse cx="29.500" cy="26" rx="17" ry="24.500" fill="#ddb29b"/><ellipse cx="29.500" cy="9" rx="11" ry="6" fill="#ead0c0"/><ellipse cx="29.500" cy="44" rx="11" ry="6.500" fill="#dcb09a"/><path d="M12.500 14c-1 4-1 8 0 12l2-1c-.5-4 0-8 1-12zM46.500 13c1 4 1 8 0 12l-2-1c.5-4 0-8-1-12z" fill="#9b948f"/><path d="M18 22.500c2.500-1.500 5.500-1.500 8 0M33 22.500c2.500-1.500 5.500-1.500 8 0" stroke="#6b4a3c" stroke-width="1.300" fill="none"/><ellipse cx="22.500" cy="25.800" rx="2.400" ry="1.100" fill="#3c2a24"/><ellipse cx="36.800" cy="25.800" rx="2.400" ry="1.100" fill="#3c2a24"/><path d="M29.500 25v8" stroke="#cf9c84" stroke-width="2"/><ellipse cx="29.500" cy="34" rx="3.600" ry="1.600" fill="#c98f78"/><path d="M23.500 40.500c4 1 8 1 12 0" stroke="#a8604f" stroke-width="1.300" fill="none"/><ellipse cx="18" cy="34" rx="3" ry="5" fill="#d99a84" opacity=".4"/><ellipse cx="41" cy="34" rx="3" ry="5" fill="#d99a84" opacity=".4"/></g></svg></div><div class="badge" style="right:6.500px;top:6px;background:#7c1d12"><svg style="left:4.500px;top:4px" width="11" height="12" viewBox="0 0 11 12"><rect x="4" y=".8" width="3" height="6" rx="1.500" fill="#f3b3a8"/><path d="M2.200 5.400a3.300 3.300 0 0 0 6.600 0M5.500 8.800v2.200" fill="none" stroke="#f3b3a8" stroke-width="1"/><path d="M.8 1.200l9.400 9.600" stroke="#f3b3a8" stroke-width="1.100"/></svg></div><div class="tname">Віталій Віктор...</div></div>
<div class="tile" style="left:1316.0px;top:217.0px;width:130.7px;height:173.6px;background:radial-gradient(circle farthest-corner at 50% 58%,#2d4b73,#18294a);"><div class="av" style="left:35.4px;top:56.8px;width:60.5px;height:60.5px"><svg style="left:0;top:0" width="60.5" height="60.5" viewBox="0 0 60 60"><filter id="bl8" x="-10%" y="-10%" width="120%" height="120%"><feGaussianBlur stdDeviation="0.60"/></filter><g filter="url(#bl8)"><rect x="-3" y="-3" width="66" height="66" fill="#1b1b1b"/><circle cx="8" cy="10" r="5" fill="#3a3a3a"/><circle cx="48" cy="8" r="6" fill="#333"/><circle cx="54" cy="22" r="5" fill="#2e2e2e"/><circle cx="5" cy="28" r="4" fill="#303030"/><circle cx="40" cy="3" r="3" fill="#444"/><circle cx="16" cy="4" r="3" fill="#3c3c3c"/><path d="M0 44c6-3 10-3 14 0l4 18H-2z" fill="#8a8a8a"/><path d="M31 3c-7 0-11 6-13 14-2 9-5 16-8 24 4 3 9 3 13 1 2-8 6-14 9-20 3 2 6 8 6 14 3-2 5-6 5-12 0-10-4-21-12-21z" fill="#6d6d6d"/><path d="M27 5c-4 4-6 10-8 18-1 5-3 10-5 14" stroke="#9a9a9a" stroke-width="1.600" fill="none"/><ellipse cx="32" cy="18.500" rx="5.800" ry="8.500" fill="#cdcdcd" transform="rotate(8 32 18.500)"/><path d="M35.500 12c2 4 2 9 0 13" stroke="#8e8e8e" stroke-width="1.800" fill="none"/><path d="M27.500 16.500h3.500M33.500 17h3" stroke="#555" stroke-width="1"/><path d="M30.500 24h4" stroke="#777" stroke-width="1"/><path d="M28 26l7 1 2 7c6 1 11 4 14 9l-4 19H18l-4-20c3-5 8-8 14-10z" fill="#c6c6c6"/><path d="M19 44c8-5 22-5 30 0l-1 18H20z" fill="#e0e0e0"/><g fill="#9d9d9d"><circle cx="25" cy="48" r="1.600"/><circle cx="31" cy="46" r="1.400"/><circle cx="37" cy="48" r="1.700"/><circle cx="43" cy="47" r="1.300"/><circle cx="28" cy="53" r="1.600"/><circle cx="34" cy="52" r="1.300"/><circle cx="40" cy="54" r="1.700"/><circle cx="23" cy="56" r="1.300"/><circle cx="46" cy="53" r="1.200"/><circle cx="31" cy="58" r="1.500"/><circle cx="37" cy="58" r="1.200"/></g><ellipse cx="22" cy="38" rx="4" ry="5" fill="#e6e6e6" opacity=".7"/></g></svg></div><div class="badge" style="right:6.500px;top:6px;background:#0a3a86"><svg style="left:4.500px;top:4px" width="11" height="12" viewBox="0 0 11 12"><rect x="4" y=".8" width="3" height="6" rx="1.500" fill="#a9c6f5"/><path d="M2.200 5.400a3.300 3.300 0 0 0 6.600 0M5.500 8.800v2.200" fill="none" stroke="#a9c6f5" stroke-width="1"/><path d="M.8 1.200l9.400 9.600" stroke="#a9c6f5" stroke-width="1.100"/></svg></div><div class="tname">Саша Герасим...</div></div>
<div class="tile" style="left:1457.0px;top:217.0px;width:130.7px;height:173.6px;background:radial-gradient(circle farthest-corner at 50% 50%,#74278a,#4e1660);"><div class="avl" style="left:34.9px;top:56.9px;width:60.0px;height:60.0px;background:#ab47bc"></div><div class="t" style="left:34.9px;top:71.33px;width:60.0px;text-align:center;color:#fff;font-size:32.8px;transform:scaleX(1.00)">В</div><div class="badge" style="right:6.500px;top:6px;background:#5f147c"><svg style="left:4.500px;top:4px" width="11" height="12" viewBox="0 0 11 12"><rect x="4" y=".8" width="3" height="6" rx="1.500" fill="#e2b0f0"/><path d="M2.200 5.400a3.300 3.300 0 0 0 6.600 0M5.500 8.800v2.200" fill="none" stroke="#e2b0f0" stroke-width="1"/><path d="M.8 1.200l9.400 9.600" stroke="#e2b0f0" stroke-width="1.100"/></svg></div><div class="tname">Володимир О...</div></div>
<div class="tile" style="left:1175.2px;top:401.0px;width:130.7px;height:173.6px;background:radial-gradient(circle farthest-corner at 50% 38%,#6a5938,#44341a);"><div class="av" style="left:35.4px;top:56.8px;width:60.5px;height:60.5px"><svg style="left:0;top:0" width="60.5" height="60.5" viewBox="0 0 60 60"><filter id="bl9" x="-10%" y="-10%" width="120%" height="120%"><feGaussianBlur stdDeviation="0.50"/></filter><g filter="url(#bl9)"><rect x="-3" y="-3" width="66" height="66" fill="#e7e4e0"/><rect x="-3" y="-3" width="32.700" height="66" fill="#cbc5bf"/><g fill="#ddd8d3"><circle cx="8" cy="14" r="4"/><circle cx="18" cy="8" r="3"/><circle cx="22" cy="22" r="4"/><circle cx="6" cy="34" r="3"/><circle cx="14" cy="26" r="3"/></g><path d="M29.700 0v60" stroke="#b5afa9" stroke-width=".8"/><path d="M30 60l1-20 7-6 12-1 8 6 4 21z" fill="#232428"/><path d="M39 34l4 1-1 16-4 2z" fill="#ece9e5"/><path d="M41 28h6v7h-6z" fill="#d6a38b"/><ellipse cx="44.500" cy="22.500" rx="5.200" ry="7" fill="#dcab93"/><path d="M39.500 20c0-5 3-7.500 6-7.500s5 2 5 6c-2-2-5-3-8-2.500z" fill="#7a5846"/><path d="M39.500 22h6" stroke="#5a4034" stroke-width=".8"/><path d="M17 31c0 5 2 9 4 13" stroke="#f6f4f0" stroke-width="4" fill="none" stroke-linecap="round"/><circle cx="17" cy="29.500" r="2.700" fill="#f6f4f0"/><path d="M12 30.500l3.500-1.500v2.500z" fill="#e8892e"/><circle cx="16.300" cy="29" r=".5" fill="#222"/><ellipse cx="23" cy="48" rx="6.500" ry="7.500" fill="#f3f0ec"/><path d="M18 41c3 2 7 2 10 0l-1 4c-3 1-5 1-8 0z" fill="#c5352b"/><path d="M15 51c4 5 12 5 17 0l-1 11H16z" fill="#8a4a2c"/><path d="M15 50c-1-7 3-12 8-12" stroke="#8a4a2c" stroke-width="1.200" fill="none"/><path d="M19 54c3 2 6 2 9 0" stroke="#d94a3a" stroke-width="2" fill="none"/><rect x="55" y="37" width="4" height="4" fill="#c8483a"/></g></svg></div><div class="badge" style="right:6.500px;top:6px;background:#5d4306"><svg style="left:4.500px;top:4px" width="11" height="12" viewBox="0 0 11 12"><rect x="4" y=".8" width="3" height="6" rx="1.500" fill="#f0d58a"/><path d="M2.200 5.400a3.300 3.300 0 0 0 6.600 0M5.500 8.800v2.200" fill="none" stroke="#f0d58a" stroke-width="1"/><path d="M.8 1.200l9.400 9.600" stroke="#f0d58a" stroke-width="1.100"/></svg></div><div class="tname">Саша</div></div>
<div class="tile" style="left:1316.0px;top:401.0px;width:130.7px;height:173.6px;background:radial-gradient(circle farthest-corner at 50% 50%,#165381,#0a3354);"><div class="avl" style="left:35.9px;top:57.1px;width:60.0px;height:60.0px;background:#0859a8"></div><div class="t" style="left:35.9px;top:68.61px;width:60.0px;text-align:center;color:#fff;font-size:32.0px;transform:scaleX(1.10)">Д</div><div class="badge" style="right:6.500px;top:6px;background:#0f4876"><svg style="left:4.500px;top:4px" width="11" height="12" viewBox="0 0 11 12"><rect x="4" y=".8" width="3" height="6" rx="1.500" fill="#a8cdf0"/><path d="M2.200 5.400a3.300 3.300 0 0 0 6.600 0M5.500 8.800v2.200" fill="none" stroke="#a8cdf0" stroke-width="1"/><path d="M.8 1.200l9.400 9.600" stroke="#a8cdf0" stroke-width="1.100"/></svg></div><div class="tname">Добранюк Юр...</div></div>
<div class="tile" style="left:1457.0px;top:401.0px;width:130.7px;height:173.6px;background:radial-gradient(circle farthest-corner at 50% 36%,#6d2d3b,#4e1824);"><div class="av" style="left:35.4px;top:56.8px;width:60.5px;height:60.5px"><svg style="left:0;top:0" width="60.5" height="60.5" viewBox="0 0 60 60"><filter id="bl10" x="-10%" y="-10%" width="120%" height="120%"><feGaussianBlur stdDeviation="0.50"/></filter><g filter="url(#bl10)"><rect x="-3" y="-3" width="66" height="66" fill="#80857f"/><rect x="-3" y="-3" width="66" height="17" fill="#5b4238"/><rect x="14" y="-3" width="4" height="16" fill="#8a7468"/><rect x="34" y="-3" width="5" height="15" fill="#3a2c28"/><rect x="48" y="-3" width="14" height="12" fill="#6b4c3e"/><path d="M-3 6c5-1 9 0 12 3l2 20-14 4z" fill="#4b7a3a"/><circle cx="4" cy="14" r="4" fill="#629a4a"/><path d="M1 30c1-8 5-14 12-16l28-1c7 1 13 6 18 13l4 2v24l-6 5-34 3-18-8z" fill="#121316"/><path d="M12 15.500l29-2c6 2 11 7 15 12.500l-34 4z" fill="#3d444c"/><path d="M3 18l8-1.500 2 11-9 3z" fill="#4a525a"/><path d="M20 31l36-4" stroke="#2a2d33" stroke-width="1"/><circle cx="38" cy="26" r="5" fill="#efe08a"/><circle cx="42" cy="24" r="4" fill="#f4ea9c"/><circle cx="35" cy="23" r="3.500" fill="#e8d878"/><path d="M45 25l9-3 1 3-8 3z" fill="#7aa85a"/><path d="M23 37l10-1.500 1 7-9 2z" fill="#e2262f"/><path d="M27 38.500l5-.7.500 3.500-5 .9z" fill="#f5d8d8"/><path d="M43 37.500l19-2v5l-18 2z" fill="#eeeee8"/><path d="M46 39.200l14-1.500" stroke="#555" stroke-width="1.200"/><ellipse cx="10.500" cy="47" rx="4.500" ry="8" fill="#0a0a0c"/><ellipse cx="10.500" cy="47" rx="2.200" ry="4.500" fill="#3a3c40"/><path d="M-3 54l20 6 40-3 6-4v10H-3z" fill="#6f746f"/></g></svg></div><div class="badge" style="right:6.500px;top:6px;background:#7c0d1c"><svg style="left:4.500px;top:4px" width="11" height="12" viewBox="0 0 11 12"><rect x="4" y=".8" width="3" height="6" rx="1.500" fill="#f5aeb6"/><path d="M2.200 5.400a3.300 3.300 0 0 0 6.600 0M5.500 8.800v2.200" fill="none" stroke="#f5aeb6" stroke-width="1"/><path d="M.8 1.200l9.400 9.600" stroke="#f5aeb6" stroke-width="1.100"/></svg></div><div class="tname">павел коваль</div></div>
<div class="tile" style="left:1175.2px;top:585.2px;width:130.7px;height:173.6px;background:radial-gradient(circle farthest-corner at 50% 50%,#58339a,#371a68);"><div class="avl" style="left:35.7px;top:57.2px;width:60.0px;height:60.0px;background:#7e57c2"></div><div class="t" style="left:35.7px;top:71.20px;width:60.0px;text-align:center;color:#fff;font-size:32.6px;transform:scaleX(1.00)">К</div><div class="badge" style="right:6.500px;top:6px;background:#4a189c"><svg style="left:4.500px;top:4px" width="11" height="12" viewBox="0 0 11 12"><rect x="4" y=".8" width="3" height="6" rx="1.500" fill="#d6c0f8"/><path d="M2.200 5.400a3.300 3.300 0 0 0 6.600 0M5.500 8.800v2.200" fill="none" stroke="#d6c0f8" stroke-width="1"/><path d="M.8 1.200l9.400 9.600" stroke="#d6c0f8" stroke-width="1.100"/></svg></div><div class="tname">Кучеренко Ліл...</div></div>
<div class="tile" style="left:1316.0px;top:585.2px;width:130.7px;height:173.6px;background:#333537;"><div class="av" style="left:28.8px;top:52.8px;width:38.0px;height:38.0px"><svg style="left:0;top:0" width="38.0" height="38.0" viewBox="0 0 40 40"><filter id="bl11" x="-10%" y="-10%" width="120%" height="120%"><feGaussianBlur stdDeviation="0.45"/></filter><g filter="url(#bl11)"><rect x="-3" y="-3" width="46" height="46" fill="#1c2226"/><path d="M22 -2h22v22l-8 4-10-8z" fill="#44606c"/><rect x="30" y="2" width="6" height="14" fill="#6a8a98" opacity=".6"/><rect x="-2" y="-2" width="10" height="30" fill="#111315"/><path d="M1 40c1-8 6-13 13-14h11c7 1 12 6 13 14z" fill="#d8d3c5"/><path d="M16 24h8v5l-4 2-4-2z" fill="#c39a82"/><ellipse cx="20.500" cy="18.500" rx="7.800" ry="10" fill="#cfa58c"/><path d="M11.500 17c-1-9 3-14 9-14s11 4 9.500 13c-2-4-4-6-8-6-4 0-8 2-10.500 7z" fill="#2a1f1a"/><rect x="9.800" y="12.500" width="3.600" height="11" rx="1.600" fill="#0e0e0e"/><path d="M13 16.500h16.500c.6 0 1 .4 1 1v1.500c0 2-1.500 3.200-3.500 3.200h-2.500c-1.400 0-2.300-.8-2.700-2.200-.4 1.400-1.300 2.200-2.700 2.200H17c-2.200 0-4-1.200-4-3.400z" fill="#0b0b0c"/><path d="M18 27c1.500 1 3.500 1 5 0" stroke="#9a6a58" stroke-width=".9" fill="none"/></g></svg></div><div class="avl" style="left:65.7px;top:52.3px;width:39.0px;height:39.0px;background:#5d4037"></div><div class="t" style="left:65.7px;top:61.72px;width:39.0px;text-align:center;color:#fff;font-size:21.0px;transform:scaleX(1.00)">В</div><div class="abs" style="left:0;width:100%;text-align:center;top:105.500px;color:#fff;font-weight:700;font-size:12.900px;line-height:15px;letter-spacing:-.1px">Ще 2 особи</div></div>
<div class="tile" style="left:1454.5px;top:582.8px;width:134.6px;height:178.7px;background:radial-gradient(circle farthest-corner at 50% 36%,#6c4331,#4a2a1a);border:2.200px solid #f5b7a2;border-radius:14px;"><div class="abs" style="left:27px;top:49.600px;width:76px;height:76px;border-radius:50%;background:rgba(140,90,70,.45)"></div><div class="abs" style="left:32.800px;top:55.400px;width:64.400px;height:64.400px;border-radius:50%;background:#f7b9a4"></div><div class="av" style="left:35.2px;top:57.8px;width:59.5px;height:59.5px"><svg style="left:0;top:0" width="59.5" height="59.5" viewBox="0 0 60 60"><filter id="bl12" x="-10%" y="-10%" width="120%" height="120%"><feGaussianBlur stdDeviation="0.55"/></filter><g filter="url(#bl12)"><rect x="-3" y="-3" width="66" height="66" fill="#e9e3df"/><path d="M30 -1c-10 0-15 7-16 17-1 11-2 20-9 30 3 6 9 9 16 10l12-20 16-2c3-6 4-13 3-20C51 5 43-1 30-1z" fill="#4a2f2a"/><path d="M22 36l18 0 4 6c6 1 11 3 16 7v14H14l3-16z" fill="#f1ede9"/><path d="M25 34h13l2 9-7 8-8-7z" fill="#ebc6b6"/><ellipse cx="31.500" cy="21" rx="12.500" ry="16.500" fill="#f1d3c5" transform="rotate(-6 31.500 21)"/><path d="M19 12c2-7 8-10.500 15-9.500 6 1 10 4 11 10-4-3.500-8-5-13-5-5 .3-9 1.500-13 4.500z" fill="#4a2f2a"/><path d="M19.500 13c-1.500 6-1 12 1 18-3-1-5-3-6-6 0-5 2-9 5-12z" fill="#4a2f2a"/><path d="M22.500 14.500c2-1 4-1 6 0M34 14c2-1 4-1 6 0" stroke="#5a3a30" stroke-width="1" fill="none"/><ellipse cx="25.500" cy="16.800" rx="2" ry="1" fill="#4a342c"/><ellipse cx="37" cy="16.300" rx="2" ry="1" fill="#4a342c"/><path d="M31 17v7" stroke="#dcb3a2" stroke-width="1.600"/><path d="M26.500 28.500c2.500 1.800 6.500 1.800 9 0-2.500-.9-6.500-.9-9 0z" fill="#c9545a"/><path d="M45 42c3 1 5 3 6 6l-4 3-4-3z" fill="#c9474c" opacity=".75"/><path d="M40 40l3 12" stroke="#c9474c" stroke-width="1" opacity=".6"/><path d="M8 50c3-4 7-6 12-6l-2 18H6z" fill="#4a2f2a"/></g></svg></div><div class="tname">Бондар Альо...</div></div>
<div class="t" style="left:20px;top:827.300px;font-size:12.300px;font-weight:700;color:#fff;letter-spacing:-.35px">14:19</div>
<div class="abs" style="left:60.800px;top:826.600px;width:1px;height:13.200px;background:#c4c7c5"></div>
<div class="t" style="left:71.300px;top:826.300px;font-size:13.200px;font-weight:700;color:#fff;letter-spacing:.28px">ynv-paip-jei</div>
<div class="cbtn" style="left:565px;width:73px;background:#28292c"></div>
<div class="cbtn" style="left:598.500px;width:39.500px"></div>
<svg style="left:577.500px;top:826.500px" width="13" height="13" viewBox="0 0 13 13"><path d="M2 4.500v4M6.500 1.500v10M11 4.500v4" stroke="#a8c7fa" stroke-width="1.700" stroke-linecap="round"/></svg>
<svg style="left:611px;top:824px" width="14" height="18" viewBox="0 0 14 18"><rect x="4.300" y="1" width="5.400" height="10" rx="2.700" fill="#e3e3e3"/><path d="M1.600 8.200a5.400 5.400 0 0 0 10.800 0M7 13.600V17" fill="none" stroke="#e3e3e3" stroke-width="1.700"/></svg>
<div class="cbtn" style="left:645px;width:73px;background:#28292c;border-radius:20px 9px 9px 20px"></div>
<svg style="left:659px;top:829.500px" width="11" height="7" viewBox="0 0 11 7"><path d="M1.200 6l4.300-4.300L9.800 6" fill="none" stroke="#9aa0a6" stroke-width="1.600"/></svg>
<div class="cbtn" style="left:678.400px;width:39.700px;background:#f9dedc;border-radius:9px"></div>
<svg style="left:688px;top:823.500px" width="21" height="20" viewBox="0 0 21 20"><path d="M3 4.500h10.500v4L18 5v10l-4.500-3.500v4H3z" fill="none" stroke="#5f1412" stroke-width="2" stroke-linejoin="round"/><path d="M13.500 8.500L18 5v10l-4.500-3.500z" fill="#5f1412"/><path d="M2 1.500l16 17" stroke="#f9dedc" stroke-width="4"/><path d="M2.500 1l16 17" stroke="#5f1412" stroke-width="2"/></svg>
<div class="cbtn" style="left:725.200px;width:46.500px;background:#a8c7fa;border-radius:10px"></div>
<svg style="left:738.500px;top:824px" width="20" height="18" viewBox="0 0 20 18"><rect x="2.200" y="1.200" width="15.600" height="11.600" rx="1.200" fill="none" stroke="#062e6f" stroke-width="1.900"/><path d="M.5 16.200h19" stroke="#062e6f" stroke-width="1.800"/><path d="M10 3.800l3.200 3.200h-2.100v3H8.900V7H6.800z" fill="#062e6f"/></svg>
<div class="cbtn" style="left:778.200px;width:46.800px"></div>
<svg style="left:792.500px;top:824px" width="18" height="18" viewBox="0 0 18 18"><circle cx="9" cy="9" r="7.300" fill="none" stroke="#e3e3e3" stroke-width="1.800"/><circle cx="6.300" cy="7" r="1.300" fill="#e3e3e3"/><circle cx="11.700" cy="7" r="1.300" fill="#e3e3e3"/><path d="M4.800 10.200a4.300 4.300 0 0 0 8.400 0z" fill="#e3e3e3"/></svg>
<div class="cbtn" style="left:831.800px;width:46.500px"></div>
<svg style="left:846px;top:825px" width="18" height="16" viewBox="0 0 18 16"><rect x="1.200" y="1.200" width="15.600" height="13.600" rx="1.500" fill="none" stroke="#e3e3e3" stroke-width="1.900"/><path d="M7.800 6.200H4.800v3.600h3M13.400 6.200h-3v3.600h3" fill="none" stroke="#e3e3e3" stroke-width="1.500"/></svg>
<div class="cbtn" style="left:885.100px;width:46.500px"></div>
<svg style="left:897.600px;top:821.600px" width="22" height="23" viewBox="0 0 20 21"><path d="M6.200 11.500V4.600M8.900 10.500V2.800M11.600 10.500V3.300M14.300 11V5.600" stroke="#e3e3e3" stroke-width="1.900" stroke-linecap="round" fill="none"/><path d="M14.300 11v3.200c0 3.200-2.300 5.400-5.400 5.400-2.500 0-4.100-1.200-5.300-3.400L1.300 12c-.4-.9.700-1.700 1.500-1l3.400 3.200v-3" fill="none" stroke="#e3e3e3" stroke-width="1.800" stroke-linejoin="round" stroke-linecap="round"/></svg>
<div class="cbtn" style="left:938.100px;width:30px"></div>
<svg style="left:950.600px;top:825px" width="5" height="17" viewBox="0 0 5 17"><circle cx="2.500" cy="2.500" r="1.800" fill="#e3e3e3"/><circle cx="2.500" cy="8.500" r="1.800" fill="#e3e3e3"/><circle cx="2.500" cy="14.500" r="1.800" fill="#e3e3e3"/></svg>
<div class="cbtn" style="left:974.800px;width:60.200px;background:#dc362e"></div>
<svg style="left:994px;top:828.500px" width="22" height="10" viewBox="0 0 22 10"><path d="M11 1.200c-3.600 0-7 1-9.600 3-.5.400-.6 1-.3 1.500l1.500 2.400c.3.500.9.700 1.400.4l2.600-1.300c.4-.2.700-.6.700-1.100V4.600c1.200-.4 2.400-.6 3.700-.6s2.500.2 3.700.6v1.500c0 .5.300.9.700 1.100l2.600 1.300c.5.300 1.100.1 1.400-.4l1.500-2.400c.3-.5.200-1.100-.3-1.500-2.600-2-6-3-9.600-3z" fill="#fff"/></svg>
<svg style="left:1479.800px;top:823.500px" width="19" height="19" viewBox="0 0 19 19"><circle cx="9.500" cy="9.500" r="7.600" fill="none" stroke="#fff" stroke-width="1.800"/><path d="M9.500 8.500v5" stroke="#fff" stroke-width="1.900"/><circle cx="9.500" cy="5.800" r="1.100" fill="#fff"/></svg>
<svg style="left:1519.800px;top:823.600px" width="19" height="19" viewBox="0 0 19 19"><path d="M2 2h15v12H5.500L2 17.500z" fill="none" stroke="#fff" stroke-width="1.800" stroke-linejoin="round"/><path d="M5 5.600h9M5 8.200h9M5 10.800h6" stroke="#fff" stroke-width="1.300"/></svg>
<svg style="left:1562.300px;top:825.800px" width="15.200" height="15.200" viewBox="0 0 17 17"><rect x="1.0" y="1.0" width="3.800" height="3.800" rx="1.500" fill="#fff"/><rect x="6.6" y="1.0" width="3.800" height="3.800" rx="1.500" fill="#fff"/><rect x="12.2" y="1.0" width="3.800" height="3.800" rx="1.500" fill="#fff"/><rect x="1.0" y="6.6" width="3.800" height="3.800" rx="1.500" fill="#fff"/><rect x="6.6" y="6.6" width="3.800" height="3.800" rx="1.500" fill="#fff"/><rect x="12.2" y="6.6" width="3.800" height="3.800" rx="1.500" fill="#fff"/><rect x="1.0" y="12.2" width="3.800" height="3.800" rx="1.500" fill="#fff"/><rect x="6.6" y="12.2" width="3.800" height="3.800" rx="1.500" fill="#fff"/><rect x="12.2" y="12.2" width="3.800" height="3.800" rx="1.500" fill="#fff"/></svg>
<div class="abs" style="left:0;top:866.500px;width:1600px;height:34px;background:linear-gradient(90deg,#d6e4d0 0%,#dce6cf 14%,#e8e7c8 24%,#ede7c4 34%,#ece6c5 50%,#e3e6c8 58%,#d3e3c9 70%,#cbe0c8 85%,#c9dfc9 100%)">
<div class="abs" style="left:327px;top:0;width:40.500px;height:34px;background:rgba(255,255,255,.42)"></div>
<svg style="left:13.0px;top:9.9px" width="14" height="14" viewBox="0 0 14 14"><path d="M0 1.900L5.600 1.100V6.300H0zM6.500 1L13.800 0V6.300H6.500zM0 7.100H5.600V12.300L0 11.500zM6.500 7.100H13.800V13.400L6.500 12.400z" fill="#0c0c0c"/></svg>
<svg style="left:52.2px;top:9.6px" width="15" height="14" viewBox="0 0 15 14"><path d="M1 1.200h10.500M1 12.800h10.500" stroke="#111" stroke-width="1.200"/><rect x="2.300" y="3.600" width="8" height="6.800" fill="none" stroke="#111" stroke-width="1.200"/><circle cx="13.600" cy="5" r="1" fill="#111"/><path d="M13.600 6.500v6.900" stroke="#111" stroke-width="1.100"/></svg>
<svg style="left:92.5px;top:7.3px" width="20" height="18" viewBox="0 0 20 18"><defs><linearGradient id="cpl" x1="0" y1="0" x2="0" y2="1"><stop offset="0" stop-color="#2a7de1"/><stop offset=".35" stop-color="#36b3a0"/><stop offset=".6" stop-color="#7bc043"/><stop offset=".8" stop-color="#f9b529"/><stop offset="1" stop-color="#f0533a"/></linearGradient><linearGradient id="cpr" x1="0" y1="0" x2="0" y2="1"><stop offset="0" stop-color="#5a6ff0"/><stop offset=".35" stop-color="#b45ae0"/><stop offset=".7" stop-color="#e85a9a"/><stop offset="1" stop-color="#f58a4a"/></linearGradient></defs><path d="M9.300 1.200h3.200c1.300 0 2.200.8 2.500 2l.7 2.600h-2.900c-1.200 0-2 .7-2.400 1.900l-2 6.700c-.5 1.600-1.500 2.400-3 2.400H4.200c-2.200 0-3.400-1.800-2.800-3.900l2.700-8.500C4.700 2.300 6.200 1.200 9.300 1.200z" fill="url(#cpl)"/><path d="M10.700 16.800H7.500c-1.300 0-2.200-.8-2.500-2l-.7-2.600h2.900c1.200 0 2-.7 2.400-1.900l2-6.700c.5-1.600 1.500-2.400 3-2.400h1.200c2.200 0 3.400 1.800 2.800 3.900l-2.700 8.500c-.6 2.100-2.100 3.200-5.200 3.200z" fill="url(#cpr)"/><path d="M11.600 3.600L8.400 14.400" stroke="#f4f6f0" stroke-width="1.300" stroke-linecap="round"/></svg>
<svg style="left:133.0px;top:6.7px" width="20" height="20" viewBox="0 0 20 20"><path d="M1.500 4h6l1.500 2h9.500v10h-17z" fill="#f5b63c"/><path d="M1.500 7.500h17V17h-17z" fill="#fcd462"/><path d="M6 12h8v5H6z" fill="#3a7bd5"/><path d="M8 14h4v3H8z" fill="#fcd462"/></svg>
<svg style="left:174.0px;top:6.7px" width="20" height="20" viewBox="0 0 20 20"><path d="M4 1.500h13v17H1.500z" fill="#3aa8e0"/><path d="M4 18.500C6 9 9 4 13 1.500h4v17z" fill="#e8f4fb"/><path d="M9 18.500C9.500 10 11 5 14 1.500h3v17z" fill="#3aa8e0" opacity=".55"/></svg>
<svg style="left:214.8px;top:6.5px" width="20" height="20" viewBox="0 0 20 20"><path d="M10 1.500c5.400 0 8.400 2.400 8.400 7.600 0 5-3 7.500-8.400 7.500-.6 0-1.200 0-1.700-.1L5.400 19.300v-3.700C2.900 14.400 1.600 12.200 1.600 9.100 1.600 3.900 4.600 1.500 10 1.500z" fill="#7360f2" stroke="#f1eefc" stroke-width="1.400"/><path d="M6.900 5.300c.5-.5 1.200-.3 1.500.3l.6 1.200c.2.500.1 1-.3 1.300-.3.300-.4.600-.1 1.200.5.900 1.200 1.600 2.100 2.100.5.300.9.300 1.200 0 .3-.4.800-.6 1.300-.4l1.200.6c.6.300.8 1 .3 1.500-.8 1-2 1.200-3.200.7-2.600-1-4.600-3-5.600-5.500-.4-1.200-.1-2.300 1-3z" fill="#fff"/><path d="M10.600 4.400c2.200.3 3.700 1.800 4 4M10.800 6.200c1.100.2 1.800.9 2 2" stroke="#fff" stroke-width=".8" fill="none"/></svg>
<svg style="left:255.7px;top:6.4px" width="20" height="20" viewBox="0 0 20 20"><defs><linearGradient id="edA" x1="0" y1="1" x2="1" y2="0"><stop offset="0" stop-color="#0c4fa0"/><stop offset=".5" stop-color="#1b7fd6"/><stop offset="1" stop-color="#2aa0e0"/></linearGradient><linearGradient id="edB" x1="0" y1="0" x2="1" y2="0"><stop offset="0" stop-color="#2db4c8"/><stop offset=".6" stop-color="#46c98a"/><stop offset="1" stop-color="#7bd94e"/></linearGradient></defs><circle cx="10.300" cy="10.200" r="10" fill="url(#edA)"/><path d="M.5 9C1 4 5.200.2 10.300.2c5.300 0 9.600 4 10 9.200.1 2.400-1.700 4.400-4.400 4.400-2 0-3.300-.8-3.300-1.800 0-.7.700-1 .7-2.200 0-1.800-1.600-3.400-4-3.400C5.600 6.400 2.200 7.200.5 9z" fill="url(#edB)"/><path d="M6.200 11c0-2.400 1.600-4 3.800-4.400-2.400-.4-5 .6-6 2.800-1.300 3 .1 7 3.400 9.300 2.400 1.600 6 1.800 8.600.2-5 .6-9.800-3-9.800-7.900z" fill="#0b3f86"/></svg>
<svg style="left:296.0px;top:6.7px" width="20" height="20" viewBox="0 0 20 20"><circle cx="10" cy="10" r="8.600" fill="#2aa3df"/><path d="M4.500 9.800l10-4c.5-.2.900.1.700.9l-1.700 8c-.1.600-.5.700-1 .4l-2.600-1.900-1.300 1.200c-.1.100-.3.300-.5.300l.2-2.700 4.900-4.400c.2-.2 0-.3-.3-.1l-6 3.800-2.600-.8c-.6-.2-.6-.6.200-.7z" fill="#fff"/></svg>
<svg style="left:337.0px;top:6.7px" width="20" height="20" viewBox="0 0 20 20"><circle cx="10" cy="10" r="8.800" fill="#fff"/><path d="M10 1.200a8.800 8.800 0 0 1 7.600 4.400H10a4.400 4.400 0 0 0-3.800 2.200L2.400 5.600A8.800 8.800 0 0 1 10 1.200z" fill="#ea4335"/><path d="M17.600 5.600a8.800 8.800 0 0 1-7.200 13.200l3.800-6.600a4.400 4.400 0 0 0 0-4.400z" fill="#fbbc04"/><path d="M10.400 18.800A8.800 8.800 0 0 1 2.400 5.600l3.800 6.600a4.400 4.400 0 0 0 3.800 2.200z" fill="#34a853"/><circle cx="10" cy="10" r="3.500" fill="#4285f4" stroke="#fff" stroke-width=".9"/><circle cx="15.500" cy="14.500" r="4.200" fill="#d9b9a8"/><path d="M12 15c0-3 1.500-4.600 3.500-4.600S19 12 19 15c-1-.8-1.200-2-1.400-2.800-1 .6-2.600.7-3.800.2-.3.900-.8 1.900-1.800 2.600z" fill="#6b4432"/></svg>
<svg style="left:378.0px;top:6.7px" width="20" height="20" viewBox="0 0 20 20"><rect x="3.500" y="1.500" width="13" height="17" rx="1" fill="#5f6b7a"/><rect x="5" y="3" width="10" height="3.600" fill="#8fd3f0"/><g fill="#e6eaee"><rect x="5" y="8" width="2.600" height="2.400"/><rect x="8.700" y="8" width="2.600" height="2.400"/><rect x="12.400" y="8" width="2.600" height="2.400"/><rect x="5" y="11.400" width="2.600" height="2.400"/><rect x="8.700" y="11.400" width="2.600" height="2.400"/><rect x="5" y="14.800" width="2.600" height="2.400"/><rect x="8.700" y="14.800" width="2.600" height="2.400"/></g><rect x="12.400" y="11.400" width="2.600" height="5.800" fill="#3a7bd5"/></svg>
<svg style="left:419.0px;top:6.7px" width="20" height="20" viewBox="0 0 20 20"><rect x="6" y="2" width="12" height="16" rx="1" fill="#2b7cd3"/><rect x="6" y="6" width="12" height="4" fill="#185abd"/><rect x="6" y="10" width="12" height="4" fill="#103f91"/><rect x="6" y="14" width="12" height="4" rx="1" fill="#0c3275"/><rect x="1.500" y="5.500" width="9.500" height="9.500" rx="1" fill="#185abd"/><text x="6.250" y="13.200" text-anchor="middle" font-family="Liberation Sans, sans-serif" font-weight="700" font-size="7.500" fill="#fff">W</text></svg>
<svg style="left:460.0px;top:6.7px" width="20" height="20" viewBox="0 0 20 20"><path d="M1.500 1.500h13l4 4v13h-17z" fill="#7a2a8a"/><path d="M14.500 1.500l4 4h-4z" fill="#c9a3d3"/><text x="9.500" y="11.600" text-anchor="middle" font-family="Liberation Sans, sans-serif" font-weight="700" font-style="italic" font-size="10" fill="#fff">G</text><text x="10" y="17" text-anchor="middle" font-family="Liberation Sans, sans-serif" font-weight="700" font-size="3.800" fill="#fff">PDF</text></svg>
<svg style="left:501.0px;top:6.7px" width="20" height="20" viewBox="0 0 20 20"><path d="M6 2.500l10-.5 1.500 12-3 4H3z" fill="#bfe3f2"/><path d="M6 2.500l10-.5.400 2.400L5.600 5z" fill="#7fb9d6"/><path d="M14.500 18l3-4-2.600.6z" fill="#8a8a8a"/><path d="M3 18h11.500l.4-3.400L4 15z" fill="#e6f3f9"/></svg>
<svg style="left:542.0px;top:6.7px" width="20" height="20" viewBox="0 0 20 20"><ellipse cx="9.500" cy="8" rx="8" ry="5.500" fill="#fff" stroke="#e0474c" stroke-width="1.400" transform="rotate(-12 9.500 8)"/><path d="M8 6l6 9M13 6l-5 9" stroke="#888" stroke-width="1.200"/><circle cx="8" cy="16.500" r="2" fill="none" stroke="#2a8ad6" stroke-width="1.400"/><circle cx="14.500" cy="16" r="2" fill="none" stroke="#2a8ad6" stroke-width="1.400"/></svg>
<svg style="left:582.0px;top:6.7px" width="20" height="20" viewBox="0 0 20 20"><circle cx="11.500" cy="10" r="8" fill="#ed6c47"/><path d="M11.500 2a8 8 0 0 1 8 8h-8z" fill="#ff8f6b"/><path d="M11.500 18a8 8 0 0 0 8-8h-8z" fill="#d35230"/><rect x="1.500" y="5.500" width="9.500" height="9.500" rx="1" fill="#c43e1c"/><text x="6.250" y="13.200" text-anchor="middle" font-family="Liberation Sans, sans-serif" font-weight="700" font-size="7.500" fill="#fff">P</text></svg>
<svg style="left:623.0px;top:6.7px" width="20" height="20" viewBox="0 0 20 20"><path d="M9 5c4.500 0 8 2.600 8 6s-2.600 5.600-5 5.600c-1.600 0-1.600-1.600-3-1.600s-2 2-4 1.400C2.600 15.600 1.600 13 1.600 11 1.600 7.600 4.500 5 9 5z" fill="#b9d3e6" stroke="#6d8aa3" stroke-width=".8"/><circle cx="5.500" cy="10" r="1.300" fill="#e8453c"/><circle cx="9" cy="8" r="1.300" fill="#f5c33b"/><circle cx="12.600" cy="9" r="1.300" fill="#4caf50"/><circle cx="6.500" cy="13.500" r="1.300" fill="#3a7bd5"/><path d="M12 15l5-11 1.200.6-4.400 11z" fill="#c98b3a"/><path d="M17 4l.8-2.500 1 .5-.6 2.600z" fill="#7a5a2a"/></svg>
<div class="abs" style="left:127.0px;top:31.600px;width:26.0px;height:2.400px;background:#0b78d4"></div><div class="abs" style="left:153.0px;top:31.600px;width:6.0px;height:2.400px;background:#7fb4e6"></div>
<div class="abs" style="left:208.5px;top:31.600px;width:33.0px;height:2.400px;background:#0b78d4"></div>
<div class="abs" style="left:249.5px;top:31.600px;width:33.0px;height:2.400px;background:#0b78d4"></div>
<div class="abs" style="left:290.5px;top:31.600px;width:33.0px;height:2.400px;background:#0b78d4"></div>
<div class="abs" style="left:327.0px;top:31.600px;width:40.5px;height:2.400px;background:#0b78d4"></div>
<div class="abs" style="left:372.0px;top:31.600px;width:32.0px;height:2.400px;background:#0b78d4"></div>
<div class="abs" style="left:412.5px;top:31.600px;width:28.5px;height:2.400px;background:#0b78d4"></div><div class="abs" style="left:441.0px;top:31.600px;width:5.5px;height:2.400px;background:#7fb4e6"></div>
<div class="abs" style="left:453.5px;top:31.600px;width:33.0px;height:2.400px;background:#0b78d4"></div>
<div class="abs" style="left:494.5px;top:31.600px;width:27.5px;height:2.400px;background:#0b78d4"></div><div class="abs" style="left:522.0px;top:31.600px;width:5.5px;height:2.400px;background:#7fb4e6"></div>
<div class="abs" style="left:535.5px;top:31.600px;width:32.5px;height:2.400px;background:#0b78d4"></div>
<div class="abs" style="left:576.0px;top:31.600px;width:33.0px;height:2.400px;background:#0b78d4"></div>
<div class="abs" style="left:617.0px;top:31.600px;width:27.0px;height:2.400px;background:#0b78d4"></div><div class="abs" style="left:644.0px;top:31.600px;width:6.0px;height:2.400px;background:#7fb4e6"></div>
<div class="abs" style="left:1226.300px;top:8px;width:17.500px;height:17.500px;border-radius:50%;background:radial-gradient(circle at 35% 30%,#ffc83a,#fb9a14 55%,#f2780c)"></div>
<div class="t" style="left:1252px;top:11.500px;font-size:11px;color:#1b1b1b;letter-spacing:-.4px">12°C</div>
<div class="t" style="left:1283.200px;top:11.500px;font-size:11px;color:#1b1b1b;letter-spacing:-.1px">Sunny</div>
<svg style="left:1334.7px;top:12.7px" width="12" height="9" viewBox="0 0 12 9"><path d="M1.200 7L6 2.200 10.800 7" fill="none" stroke="#1b1b1b" stroke-width="1.200"/></svg>
<svg style="left:1353.0px;top:10.6px" width="14" height="13" viewBox="0 0 14 13"><path d="M4 9.500a3 3 0 0 1 .4-6 4 4 0 0 1 7.600 1A2.600 2.600 0 0 1 12 9.500" fill="none" stroke="#222" stroke-width="1.100"/><circle cx="9.600" cy="9.600" r="2.700" fill="#1a73e8"/><path d="M9.600 8.800v2.200" stroke="#fff" stroke-width=".9"/><circle cx="9.600" cy="7.900" r=".5" fill="#fff"/></svg>
<svg style="left:1375.0px;top:10.1px" width="10" height="14" viewBox="0 0 10 14"><rect x="3" y=".5" width="4" height="8" rx="2" fill="#222"/><path d="M1.200 6.500a3.800 3.800 0 0 0 7.600 0M5 10.300v2M2.800 12.600h4.400" fill="none" stroke="#222" stroke-width="1"/></svg>
<svg style="left:1393.7px;top:10.6px" width="14" height="13" viewBox="0 0 14 13"><rect x="1" y="1.500" width="12" height="9.500" fill="none" stroke="#222" stroke-width="1.100"/><path d="M4 8c.2-1.400 1-2.200 2.500-2.200V4.600l2 1.800-2 1.800V7c-1 0-1.800.3-2.500 1z" fill="#222"/><circle cx="11.500" cy="10.500" r="2.400" fill="#2a6fd6"/></svg>
<svg style="left:1413.7px;top:11.1px" width="15" height="12" viewBox="0 0 15 12"><rect x="2.500" y="3" width="10.500" height="6.500" fill="none" stroke="#222" stroke-width="1"/><rect x="3.800" y="4.300" width="7.900" height="3.900" fill="#222"/><rect x="13.200" y="5" width="1.200" height="2.500" fill="#222"/><path d="M2.500 1v3M1 2.400h3" stroke="#222" stroke-width=".9"/></svg>
<svg style="left:1436.0px;top:11.5px" width="12" height="12" viewBox="0 0 12 12"><path d="M1 11A10 10 0 0 1 11 1" fill="none" stroke="#9aa39a" stroke-width="1"/><path d="M3.800 11A7.200 7.200 0 0 1 11 3.800" fill="none" stroke="#8a938a" stroke-width="1"/><path d="M6.600 11A4.400 4.400 0 0 1 11 6.600" fill="none" stroke="#555" stroke-width="1"/><circle cx="10.200" cy="10.200" r="1.300" fill="#222"/></svg>
<svg style="left:1454.0px;top:11.1px" width="13" height="12" viewBox="0 0 13 12"><path d="M1 4.200h2.200L6 1.600v8.800L3.200 7.800H1z" fill="none" stroke="#222" stroke-width="1"/><path d="M7.600 4a2.800 2.800 0 0 1 0 4M9.200 2.400a5 5 0 0 1 0 7.200" fill="none" stroke="#222" stroke-width=".9"/><path d="M10.900 1a7 7 0 0 1 0 10" fill="none" stroke="#999" stroke-width=".9"/></svg>
<div class="t" style="left:1465.700px;width:40px;text-align:center;top:5px;font-size:9.800px;color:#1b1b1b;letter-spacing:-.2px">РУС</div>
<div class="t" style="left:1465.700px;width:40px;text-align:center;top:19.300px;font-size:9.800px;color:#1b1b1b;letter-spacing:-.35px">UKRE</div>
<div class="t" style="left:1498px;width:60px;text-align:center;top:4.800px;font-size:9.800px;color:#1b1b1b;letter-spacing:-.3px">14:19</div>
<div class="t" style="left:1498px;width:60px;text-align:center;top:19.300px;font-size:9.800px;color:#1b1b1b;letter-spacing:-.35px">12.03.2026</div>
<svg style="left:1566.0px;top:9.5px" width="14" height="13" viewBox="0 0 14 13"><path d="M1 1h12v9H5l-2.500 2.500V10H1z" fill="#111"/><path d="M3 3.600h8M3 5.600h8M3 7.600h5" stroke="#cfe0cc" stroke-width=".8"/></svg>
<div class="abs" style="left:1573.200px;top:17.500px;width:11px;height:11px;border-radius:50%;background:#e9efe6;border:1px solid #555"></div>
<div class="t" style="left:1573.200px;width:11px;text-align:center;top:19.300px;font-size:8px;color:#222">1</div>
<div class="abs" style="left:1596.500px;top:3px;width:1px;height:31px;background:#b9c9b8"></div>
</div>
</div></body></html>
